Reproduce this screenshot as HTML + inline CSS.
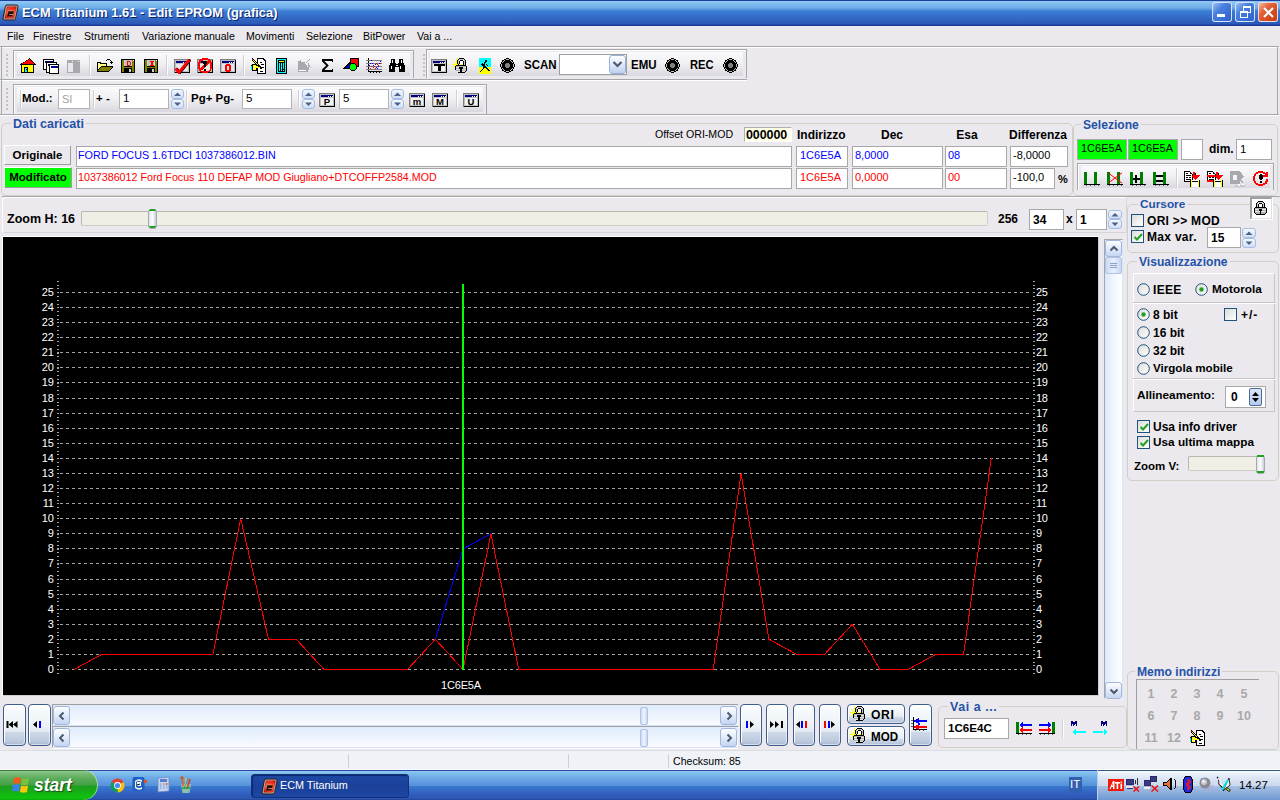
<!DOCTYPE html><html><head><meta charset="utf-8"><style>
html,body{margin:0;padding:0;}
body{width:1280px;height:800px;position:relative;overflow:hidden;background:#ebe9ed;font-family:"Liberation Sans", sans-serif;}
div{box-sizing:content-box;}
</style></head><body>
<div style="position:absolute;left:0px;top:0px;width:1280px;height:26px;background:linear-gradient(#1f3f9f 0px,#1f3f9f 1px,#92c9f3 1px,#7ab8ed 5px,#6eaae6 8px,#4f8fdb 10px,#3a7ed4 11px,#3670cc 16px,#2c57b5 24px,#1d3b96 25px,#1d3b96 26px)"></div>
<svg style="position:absolute;left:2px;top:4px" width="17" height="17" viewBox="0 0 17 17"><defs><radialGradient id="ai2" cx="0.5" cy="0.5" r="0.6"><stop offset="0" stop-color="#f8a080"/><stop offset="0.6" stop-color="#e84a2a"/><stop offset="1" stop-color="#c01010"/></radialGradient></defs>
<path d="M4.5 0.5 H15 L16.5 2 L16 6 L13.5 15.5 L12 16.5 H2 L0.5 15 L1 11 L3 2 Z" fill="#2a2020"/>
<path d="M5 1.5 H14.8 L15.6 2.5 L13 15 L12 15.6 H2.2 L1.5 14.6 L3.8 2.3 Z" fill="#b8a8a0"/>
<path d="M5.5 2.5 H14.2 L14.6 3 L12.3 14 L11.6 14.6 H3 L2.6 14 L4.8 3 Z" fill="url(#ai2)"/>
<path d="M7.2 4.5 H12.6 L12.3 5.6 H7 Z" fill="#ff1010"/>
<path d="M6.5 7.2 H11.8 L11.2 10 H7.4 L7.2 11 H10.8 L10.4 12.6 H5 Z" fill="#1a1010"/>
</svg>
<div style="position:absolute;left:22px;top:6px;font-size:13.5px;line-height:1;color:#fff;font-weight:bold;white-space:nowrap;text-shadow:1px 1px 0 #0a1f6a;transform:scaleX(0.955);transform-origin:0 0;">ECM Titanium 1.61 - Edit EPROM (grafica)</div>
<div style="position:absolute;left:1212px;top:2px;width:20px;height:20px;border:1px solid rgba(235,242,255,0.85);border-radius:3px;background:linear-gradient(135deg,#9ec0f4,#4a82e0 35%,#3a6fd6 70%,#3060c8);box-sizing:border-box"></div>
<div style="position:absolute;left:1235px;top:2px;width:20px;height:20px;border:1px solid rgba(235,242,255,0.85);border-radius:3px;background:linear-gradient(135deg,#9ec0f4,#4a82e0 35%,#3a6fd6 70%,#3060c8);box-sizing:border-box"></div>
<div style="position:absolute;left:1258px;top:2px;width:20px;height:20px;border:1px solid rgba(235,242,255,0.85);border-radius:3px;background:linear-gradient(135deg,#f2b9a0,#e4633a 35%,#d5481c 70%,#c84016);box-sizing:border-box"></div>
<div style="position:absolute;left:1217px;top:14px;width:8px;height:3px;background:#fff"></div>
<svg style="position:absolute;left:1235px;top:2px" width="21" height="21"><rect x="8.5" y="4.5" width="7" height="6" fill="none" stroke="#fff" stroke-width="1"/><rect x="8.5" y="4.5" width="7" height="1.5" fill="#fff"/><rect x="5.5" y="9.5" width="7" height="6" fill="#3d7ad8" stroke="#fff" stroke-width="1"/><rect x="5.5" y="9.5" width="7" height="1.5" fill="#fff"/></svg>
<svg style="position:absolute;left:1258px;top:2px" width="21" height="21"><path d="M6 6 L15 15 M15 6 L6 15" stroke="#fff" stroke-width="2"/></svg>
<div style="position:absolute;left:7px;top:31px;font-size:10.6px;line-height:1;color:#000;font-weight:normal;white-space:nowrap;">File</div>
<div style="position:absolute;left:33px;top:31px;font-size:10.6px;line-height:1;color:#000;font-weight:normal;white-space:nowrap;">Finestre</div>
<div style="position:absolute;left:84px;top:31px;font-size:10.6px;line-height:1;color:#000;font-weight:normal;white-space:nowrap;">Strumenti</div>
<div style="position:absolute;left:142px;top:31px;font-size:10.6px;line-height:1;color:#000;font-weight:normal;white-space:nowrap;">Variazione manuale</div>
<div style="position:absolute;left:246px;top:31px;font-size:10.6px;line-height:1;color:#000;font-weight:normal;white-space:nowrap;">Movimenti</div>
<div style="position:absolute;left:306px;top:31px;font-size:10.6px;line-height:1;color:#000;font-weight:normal;white-space:nowrap;">Selezione</div>
<div style="position:absolute;left:363px;top:31px;font-size:10.6px;line-height:1;color:#000;font-weight:normal;white-space:nowrap;">BitPower</div>
<div style="position:absolute;left:417px;top:31px;font-size:10.6px;line-height:1;color:#000;font-weight:normal;white-space:nowrap;">Vai a ...</div>
<div style="position:absolute;left:0px;top:46px;width:1279px;height:1px;background:#a7a6aa"></div>
<div style="position:absolute;left:0px;top:47px;width:1279px;height:1px;background:#fff"></div>
<div style="position:absolute;left:0px;top:79px;width:747px;height:1px;background:#a7a6aa"></div>
<div style="position:absolute;left:0px;top:80px;width:747px;height:1px;background:#fff"></div>
<div style="position:absolute;left:0px;top:114px;width:1279px;height:1px;background:#a7a6aa"></div>
<div style="position:absolute;left:0px;top:115px;width:1279px;height:1px;background:#fff"></div>
<div style="position:absolute;left:1px;top:46px;width:1px;height:69px;background:#a7a6aa"></div>
<div style="position:absolute;left:1277px;top:46px;width:1px;height:69px;background:#a7a6aa"></div>
<div style="position:absolute;left:13px;top:50px;width:400px;height:1px;background:#a7a6aa"></div>
<div style="position:absolute;left:13px;top:50px;width:1px;height:28px;background:#a7a6aa"></div>
<div style="position:absolute;left:14px;top:51px;width:399px;height:1px;background:#fff"></div>
<div style="position:absolute;left:14px;top:51px;width:1px;height:27px;background:#fff"></div>
<div style="position:absolute;left:413px;top:50px;width:1px;height:28px;background:#a7a6aa"></div>
<div style="position:absolute;left:17px;top:53px;width:393px;height:23px;background:linear-gradient(#fafafb 0%,#f1f0f3 45%,#dad8df 100%)"></div>
<div style="position:absolute;left:426px;top:49px;width:320px;height:1px;background:#a7a6aa"></div>
<div style="position:absolute;left:426px;top:49px;width:1px;height:29px;background:#a7a6aa"></div>
<div style="position:absolute;left:427px;top:50px;width:319px;height:1px;background:#fff"></div>
<div style="position:absolute;left:427px;top:50px;width:1px;height:28px;background:#fff"></div>
<div style="position:absolute;left:746px;top:49px;width:1px;height:29px;background:#a7a6aa"></div>
<div style="position:absolute;left:430px;top:52px;width:313px;height:24px;background:linear-gradient(#fafafb 0%,#f1f0f3 45%,#dad8df 100%)"></div>
<div style="position:absolute;left:13px;top:84px;width:473px;height:1px;background:#a7a6aa"></div>
<div style="position:absolute;left:13px;top:84px;width:1px;height:30px;background:#a7a6aa"></div>
<div style="position:absolute;left:14px;top:85px;width:472px;height:1px;background:#fff"></div>
<div style="position:absolute;left:14px;top:85px;width:1px;height:29px;background:#fff"></div>
<div style="position:absolute;left:486px;top:84px;width:1px;height:30px;background:#a7a6aa"></div>
<div style="position:absolute;left:17px;top:87px;width:466px;height:25px;background:linear-gradient(#fafafb 0%,#f1f0f3 45%,#dad8df 100%)"></div>
<div style="position:absolute;left:6px;top:54px;width:2px;height:2px;background:#b5b4b8;border-radius:1px"></div>
<div style="position:absolute;left:6px;top:58px;width:2px;height:2px;background:#b5b4b8;border-radius:1px"></div>
<div style="position:absolute;left:6px;top:62px;width:2px;height:2px;background:#b5b4b8;border-radius:1px"></div>
<div style="position:absolute;left:6px;top:66px;width:2px;height:2px;background:#b5b4b8;border-radius:1px"></div>
<div style="position:absolute;left:6px;top:70px;width:2px;height:2px;background:#b5b4b8;border-radius:1px"></div>
<div style="position:absolute;left:6px;top:74px;width:2px;height:2px;background:#b5b4b8;border-radius:1px"></div>
<div style="position:absolute;left:6px;top:88px;width:2px;height:2px;background:#b5b4b8;border-radius:1px"></div>
<div style="position:absolute;left:6px;top:92px;width:2px;height:2px;background:#b5b4b8;border-radius:1px"></div>
<div style="position:absolute;left:6px;top:96px;width:2px;height:2px;background:#b5b4b8;border-radius:1px"></div>
<div style="position:absolute;left:6px;top:100px;width:2px;height:2px;background:#b5b4b8;border-radius:1px"></div>
<div style="position:absolute;left:6px;top:104px;width:2px;height:2px;background:#b5b4b8;border-radius:1px"></div>
<div style="position:absolute;left:6px;top:108px;width:2px;height:2px;background:#b5b4b8;border-radius:1px"></div>
<div style="position:absolute;left:423px;top:54px;width:2px;height:2px;background:#b5b4b8;border-radius:1px"></div>
<div style="position:absolute;left:423px;top:58px;width:2px;height:2px;background:#b5b4b8;border-radius:1px"></div>
<div style="position:absolute;left:423px;top:62px;width:2px;height:2px;background:#b5b4b8;border-radius:1px"></div>
<div style="position:absolute;left:423px;top:66px;width:2px;height:2px;background:#b5b4b8;border-radius:1px"></div>
<div style="position:absolute;left:423px;top:70px;width:2px;height:2px;background:#b5b4b8;border-radius:1px"></div>
<div style="position:absolute;left:423px;top:74px;width:2px;height:2px;background:#b5b4b8;border-radius:1px"></div>
<div style="position:absolute;left:89px;top:55px;width:1px;height:20px;background:#cfced4"></div>
<div style="position:absolute;left:90px;top:55px;width:1px;height:20px;background:#fff"></div>
<div style="position:absolute;left:166px;top:55px;width:1px;height:20px;background:#cfced4"></div>
<div style="position:absolute;left:167px;top:55px;width:1px;height:20px;background:#fff"></div>
<div style="position:absolute;left:243px;top:55px;width:1px;height:20px;background:#cfced4"></div>
<div style="position:absolute;left:244px;top:55px;width:1px;height:20px;background:#fff"></div>
<div style="position:absolute;left:20px;top:90px;width:1px;height:18px;background:#cfced4"></div>
<div style="position:absolute;left:21px;top:90px;width:1px;height:18px;background:#fff"></div>
<div style="position:absolute;left:93px;top:90px;width:1px;height:18px;background:#cfced4"></div>
<div style="position:absolute;left:94px;top:90px;width:1px;height:18px;background:#fff"></div>
<div style="position:absolute;left:186px;top:90px;width:1px;height:18px;background:#cfced4"></div>
<div style="position:absolute;left:187px;top:90px;width:1px;height:18px;background:#fff"></div>
<div style="position:absolute;left:298px;top:90px;width:1px;height:18px;background:#cfced4"></div>
<div style="position:absolute;left:299px;top:90px;width:1px;height:18px;background:#fff"></div>
<div style="position:absolute;left:456px;top:90px;width:1px;height:18px;background:#cfced4"></div>
<div style="position:absolute;left:457px;top:90px;width:1px;height:18px;background:#fff"></div>
<svg style="position:absolute;left:20px;top:58px" width="17" height="16" viewBox="0 0 17 16" shape-rendering="crispEdges"><path d="M9 0 H10 V1 H11 V2 H12 V3 H13 V4 H14 V5 H15 V6 H16 V7 H14 V15 H1 V7 H0 V6 H1 V5 H3 V4 H5 V3 H6 V2 H8 V1 H9 Z" fill="#000"/><path d="M9 1 H10 V2 H11 V3 H12 V4 H13 V5 H14 V6 H2 V5 H4 V4 H6 V3 H7 V2 H9 Z" fill="#ff0000"/><rect x="2" y="7" width="11" height="7" fill="#ffff00"/><rect x="4" y="9" width="4" height="6" fill="#000"/><rect x="5" y="10" width="2" height="4" fill="#00ffff"/><rect x="6" y="11" width="1" height="1" fill="#000"/></svg>
<svg style="position:absolute;left:43px;top:59px" width="16" height="16" viewBox="0 0 16 16" shape-rendering="crispEdges"><rect x="0" y="0" width="11" height="11" fill="#000"/><rect x="1" y="1" width="9" height="9" fill="#fff"/><rect x="2" y="2" width="8" height="2" fill="#000080"/><rect x="3" y="3" width="11" height="11" fill="#000"/><rect x="4" y="4" width="9" height="9" fill="#fff"/><rect x="5" y="5" width="8" height="2" fill="#000080"/><rect x="6" y="5" width="10" height="10" fill="#000"/><rect x="7" y="6" width="8" height="8" fill="#fff"/><rect x="8" y="7" width="7" height="2" fill="#000080"/></svg>
<svg style="position:absolute;left:67px;top:60px" width="16" height="16" viewBox="0 0 16 16" shape-rendering="crispEdges"><rect x="0" y="0" width="13" height="13" fill="#a9a8ae"/><rect x="1" y="3" width="5" height="9" fill="#e9e8ec"/><rect x="5" y="1" width="1" height="1" fill="#fff"/><rect x="11" y="1" width="1" height="1" fill="#fff"/></svg>
<svg style="position:absolute;left:97px;top:58px" width="16" height="16" viewBox="0 0 16 16" shape-rendering="crispEdges"><path d="M0 4 H4 V5 H10 V8 H16 V9 L11 14 H0 Z" fill="#000"/><path d="M1 5 H3 V6 H9 V8 H4 L1 12 Z" fill="#ffff66"/><path d="M2 6 H3 V7 H2 Z M4 7 H5 V8 H4 Z M6 6 H7 V7 H6 Z M8 7 H9 V8 H8 Z M1 8 H2 V9 H1 Z M1 10 H2 V11 H1 Z" fill="#fff"/><path d="M4 9 H15 L11 13 H1 Z" fill="#808000"/><path d="M9 2 H10 V1 H13 V2 H14 V3 H15 V4 H14 V3 H13 V2 H10 V3 H9 Z" fill="#000"/><path d="M13 4 H16 V5 H15 V6 H14 V5 H13 Z" fill="#000"/></svg>
<svg style="position:absolute;left:121px;top:59px" width="14" height="14" viewBox="0 0 14 14" shape-rendering="crispEdges"><rect x="0" y="0" width="14" height="14" fill="#000"/><rect x="1" y="1" width="12" height="12" fill="#808000"/><rect x="3" y="1" width="8" height="7" fill="#000"/><rect x="3" y="1" width="8" height="6" fill="#c8d8d8"/><rect x="4" y="1" width="6" height="6" fill="#c0c0c0"/><path d="M6 2 H9 V3 H10 V6 H9 V7 H6 Z M7 3 V6 H9 V3 Z" fill="#ff0000"/><rect x="3" y="9" width="8" height="5" fill="#000"/><rect x="8" y="10" width="2" height="3" fill="#d0d0d0"/><rect x="12" y="1" width="1" height="1" fill="#fff"/></svg>
<svg style="position:absolute;left:144px;top:59px" width="14" height="14" viewBox="0 0 14 14" shape-rendering="crispEdges"><rect x="0" y="0" width="14" height="14" fill="#000"/><rect x="1" y="1" width="12" height="12" fill="#808000"/><rect x="3" y="1" width="8" height="7" fill="#000"/><rect x="3" y="1" width="8" height="6" fill="#c8d8d8"/><rect x="4" y="1" width="6" height="6" fill="#c0c0c0"/><path d="M6 2 H10 V3 H8.6 V6 H10 V7 H6 V6 H7.4 V3 H6 Z" fill="#ff0000"/><rect x="3" y="9" width="8" height="5" fill="#000"/><rect x="8" y="10" width="2" height="3" fill="#d0d0d0"/><rect x="12" y="1" width="1" height="1" fill="#fff"/></svg>
<svg style="position:absolute;left:174px;top:59px" width="17" height="15" viewBox="0 0 17 15" shape-rendering="crispEdges"><rect x="0" y="0" width="16" height="14" fill="#808080"/><rect x="1" y="1" width="15" height="13" fill="#000"/><rect x="1" y="1" width="14" height="12" fill="#c0c0c0"/><rect x="2" y="2" width="12" height="2" fill="#000080"/><rect x="9" y="3" width="1" height="1" fill="#fff"/><rect x="11" y="3" width="1" height="1" fill="#fff"/><rect x="13" y="3" width="1" height="1" fill="#fff"/><rect x="2" y="5" width="12" height="7" fill="#e8e8ea"/><path d="M1.5 9.5 L5 13.5 L15.5 0.5" stroke="#000" stroke-width="2.6" fill="none" transform="translate(1,0)" shape-rendering="geometricPrecision"/><path d="M1.5 9.5 L5 13.5 L15.5 0.5" stroke="#ff0000" stroke-width="2.8" fill="none" shape-rendering="geometricPrecision"/></svg>
<svg style="position:absolute;left:197px;top:58px" width="16" height="16" viewBox="0 0 16 16" shape-rendering="crispEdges"><g transform="translate(0,1)"><rect x="0" y="0" width="16" height="14" fill="#808080"/><rect x="1" y="1" width="15" height="13" fill="#000"/><rect x="1" y="1" width="14" height="12" fill="#c0c0c0"/><rect x="2" y="2" width="12" height="2" fill="#000080"/><rect x="9" y="3" width="1" height="1" fill="#fff"/><rect x="11" y="3" width="1" height="1" fill="#fff"/><rect x="13" y="3" width="1" height="1" fill="#fff"/><rect x="2" y="5" width="12" height="7" fill="#e8e8ea"/></g><path d="M5 0 H11 V1 H13 V2 H14 V4 H15 V11 H14 V13 H13 V14 H11 V15 H5 V14 H3 V13 H2 V11 H1 V4 H2 V2 H3 V1 H5 Z M5.5 2 V2.5 H4 V3.5 H3.5 V5 H2.8 V10.5 H3.2 L11.8 2 H10.5 V2 Z M4.2 12.8 H5.5 V13 H10.5 V12.5 H12 V11.5 H12.5 V10 H13.2 V4.5 H12.8 Z" fill="#ff0000" fill-rule="evenodd"/><rect x="7" y="3" width="2" height="6" fill="#000"/><rect x="6" y="3" width="4" height="3" fill="#000"/><rect x="7" y="11" width="2" height="2" fill="#000"/></svg>
<svg style="position:absolute;left:220px;top:59px" width="16" height="14" viewBox="0 0 16 14" shape-rendering="crispEdges"><rect x="0" y="0" width="16" height="14" fill="#808080"/><rect x="1" y="1" width="15" height="13" fill="#000"/><rect x="1" y="1" width="14" height="12" fill="#c0c0c0"/><rect x="2" y="2" width="12" height="2" fill="#000080"/><rect x="9" y="3" width="1" height="1" fill="#fff"/><rect x="11" y="3" width="1" height="1" fill="#fff"/><rect x="13" y="3" width="1" height="1" fill="#fff"/><rect x="2" y="5" width="12" height="7" fill="#e8e8ea"/><path d="M6 5 H10 V6 H11 V12 H10 V13 H6 V12 H5 V6 H6 Z M7 7 V11 H9 V7 Z" fill="#ff0000" fill-rule="evenodd"/></svg>
<svg style="position:absolute;left:251px;top:58px" width="16" height="16" viewBox="0 0 16 16" shape-rendering="crispEdges"><path d="M6 0 H12 L15 3 V16 H6 Z" fill="#000"/><path d="M7 1 H11 V4 H14 V15 H7 Z" fill="#fff"/><path d="M11 1 L14 4 H11 Z" fill="#fff"/><rect x="9" y="4" width="2" height="1" fill="#000"/><rect x="10" y="6" width="3" height="1" fill="#000"/><rect x="10" y="9" width="3" height="1" fill="#000"/><rect x="9" y="13" width="3" height="1" fill="#000"/><path d="M1 0 H2 V1 H3 V2 H4 V3 H5 V4 H6 V5 H7 V6 H8 V7 H9 V8 H10 V9 H11 V11 H9 V10 H8 V9 H7 V8 H6 V7 H5 V6 H4 V5 H3 V4 H2 V3 H1 Z" fill="#000"/><path d="M2 1 V2 H3 V3 H4 V4 H5 V5 H6 V6 H7 V7 H8 V8 H9 V9 H10 V10 H9 V9 H8 V8 H7 V7 H6 V6 H5 V5 H4 V4 H3 V3 H2 Z" fill="#ffff00"/><rect x="1" y="1" width="1" height="1" fill="#ff0000"/><path d="M0 7 H1 V6 H6 V7 H8 V8 H10 V9 H11 V10 H6 V13 H1 V12 H0 Z" fill="#000"/><path d="M2 7 H5 V8 H7 V9 H9 V10 H5 V12 H2 Z" fill="#ffff00"/><path d="M3 8 H4 V9 H3 Z M2 10 H3 V11 H2 Z M4 10 H5 V11 H4 Z" fill="#fff"/><rect x="0" y="8" width="1" height="4" fill="#00ffff"/></svg>
<svg style="position:absolute;left:276px;top:58px" width="16" height="16" viewBox="0 0 16 16" shape-rendering="crispEdges"><rect x="0" y="0" width="11" height="16" fill="#000"/><rect x="1" y="1" width="9" height="14" fill="#00ffff"/><rect x="2" y="2" width="7" height="12" fill="#000"/><rect x="3" y="3" width="5" height="1" fill="#ffff00"/><rect x="3" y="5" width="1" height="8" fill="#00ffff"/><rect x="5" y="5" width="1" height="8" fill="#00ffff"/><rect x="7" y="5" width="1" height="6" fill="#00ffff"/><rect x="7" y="12" width="1" height="1" fill="#c0c0c0"/></svg>
<svg style="position:absolute;left:297px;top:58px" width="16" height="16" viewBox="0 0 16 16" shape-rendering="crispEdges"><path d="M1 3 H3 V2 H4 V4 H8 V6 H10 V10 H11 V14 H1 Z" fill="#a9a8ae"/><rect x="2" y="12" width="7" height="1" fill="#fff"/><path d="M12 1 H13 V2 H12 V3 H11 V4 H10 V5 H9 V4 H10 V3 H11 V2 H12 Z" fill="#a9a8ae"/><path d="M11 5 H12 V7 H13 V9 H14 V10 H12 V12 H11 V14 H10 V9 H11 Z" fill="#a9a8ae"/><path d="M9 6 H10 V7 H9 Z M12 9 H13 V10 H12 Z" fill="#fff"/></svg>
<svg style="position:absolute;left:321px;top:59px" width="13" height="13" viewBox="0 0 13 13" shape-rendering="crispEdges"><rect x="1" y="0" width="11" height="2" fill="#000"/><rect x="11" y="1" width="1" height="2" fill="#000"/><rect x="1" y="11" width="11" height="2" fill="#000"/><rect x="11" y="10" width="1" height="2" fill="#000"/><path d="M1.5 1.5 L6.5 6.5 L1.5 11.5" stroke="#000" stroke-width="1.8" fill="none" shape-rendering="geometricPrecision"/></svg>
<svg style="position:absolute;left:343px;top:58px" width="16" height="16" viewBox="0 0 16 16" shape-rendering="crispEdges"><rect x="7" y="0" width="9" height="9" fill="#000"/><rect x="8" y="1" width="7" height="7" fill="#ff0000"/><path d="M0 10 L7 4 V11 H0 Z" fill="#000"/><path d="M2 10 L7 5.5 V10 Z" fill="#0000ff"/><path d="M8 5 H12 V6 H13 V7 H14 V11 H13 V12 H12 V13 H8 V12 H7 V11 H6 V7 H7 V6 H8 Z" fill="#000"/><path d="M8 6 H12 V7 H13 V11 H12 V12 H8 V11 H7 V7 H8 Z" fill="#00ff00"/></svg>
<svg style="position:absolute;left:366px;top:58px" width="16" height="16" viewBox="0 0 16 16" shape-rendering="crispEdges"><rect x="2" y="0" width="1" height="14" fill="#000"/><rect x="2" y="13" width="14" height="1" fill="#000"/><rect x="0" y="2" width="16" height="1" fill="#808080"/><rect x="0" y="5" width="16" height="1" fill="#808080"/><rect x="0" y="8" width="16" height="1" fill="#808080"/><rect x="0" y="11" width="16" height="1" fill="#808080"/><path d="M4 14 V15 M7 14 V15 M10 14 V15 M13 14 V15" stroke="#000" stroke-width="1"/><path d="M5 2 H6 V3 H5 Z M4 5 H5 V6 H4 Z M6 5 H7 V6 H6 Z M3 7 H4 V8 H3 Z M7 7 H8 V8 H7 Z M9 6 H10 V7 H9 Z M10 9 H11 V10 H10 Z M11 10 H12 V11 H11 Z M12 8 H13 V9 H12 Z M13 5 H14 V6 H13 Z M14 3 H15 V4 H14 Z" fill="#0000ff"/><path d="M4 10 H5 V11 H4 Z M5 8 H6 V9 H5 Z M7 9 H8 V10 H7 Z M8 8 H9 V9 H8 Z M9 10 H10 V11 H9 Z M10 5 H11 V6 H10 Z M11 6 H12 V7 H11 Z M12 7 H13 V8 H12 Z M14 5 H15 V6 H14 Z" fill="#ff0000"/></svg>
<svg style="position:absolute;left:389px;top:58px" width="16" height="16" viewBox="0 0 16 16" shape-rendering="crispEdges"><path d="M2 1 H6 V5 H7 V6 H9 V5 H10 V1 H14 V5 H15 V7 H16 V14 H10 V9 H6 V14 H0 V7 H1 V5 H2 Z" fill="#000"/><rect x="3" y="2" width="1" height="3" fill="#fff"/><rect x="12" y="2" width="1" height="3" fill="#fff"/><rect x="2" y="8" width="1" height="3" fill="#fff"/><rect x="11" y="8" width="1" height="3" fill="#fff"/><rect x="7" y="7" width="2" height="1" fill="#fff"/></svg>
<svg style="position:absolute;left:431px;top:59px" width="16" height="14" viewBox="0 0 16 14" shape-rendering="crispEdges"><rect x="0" y="0" width="16" height="14" fill="#808080"/><rect x="1" y="1" width="15" height="13" fill="#000"/><rect x="1" y="1" width="14" height="12" fill="#c0c0c0"/><rect x="2" y="2" width="12" height="2" fill="#000080"/><rect x="9" y="3" width="1" height="1" fill="#fff"/><rect x="11" y="3" width="1" height="1" fill="#fff"/><rect x="13" y="3" width="1" height="1" fill="#fff"/><rect x="2" y="5" width="12" height="7" fill="#f2f2f2"/><rect x="3" y="5" width="11" height="2" fill="#000"/><rect x="7" y="7" width="3" height="5" fill="#000"/></svg>
<svg style="position:absolute;left:452px;top:58px" width="16" height="16" viewBox="0 0 16 16" shape-rendering="crispEdges"><rect x="4" y="0" width="1" height="7" fill="#ffff00"/><rect x="0" y="6" width="6" height="1" fill="#ffff00"/><rect x="1" y="3" width="1" height="1" fill="#ffff00"/><rect x="2" y="4" width="1" height="1" fill="#ffff00"/><rect x="3" y="5" width="1" height="1" fill="#ffff00"/><rect x="1" y="9" width="1" height="1" fill="#ffff00"/><rect x="2" y="8" width="1" height="1" fill="#ffff00"/><rect x="3" y="7" width="1" height="1" fill="#ffff00"/><rect x="9" y="6" width="2" height="1" fill="#ffff00"/><rect x="7" y="0" width="5" height="1" fill="#000"/><rect x="6" y="1" width="1" height="1" fill="#000"/><rect x="12" y="1" width="1" height="1" fill="#000"/><rect x="5" y="2" width="1" height="4" fill="#000"/><rect x="13" y="2" width="1" height="5" fill="#000"/><rect x="7" y="1" width="5" height="1" fill="#c8c8c8"/><rect x="6" y="2" width="1" height="4" fill="#c8c8c8"/><rect x="12" y="2" width="1" height="5" fill="#c8c8c8"/><rect x="8" y="2" width="3" height="1" fill="#000"/><rect x="7" y="3" width="1" height="3" fill="#000"/><rect x="11" y="3" width="1" height="4" fill="#000"/><rect x="6" y="6" width="1" height="1" fill="#000"/><rect x="8" y="3" width="3" height="3" fill="#fff"/><path d="M4 7 H14 V8 H15 V13 H14 V14 H13 V15 H6 V14 H5 V13 H4 V12 H3 V8 H4 Z" fill="#000"/><rect x="4" y="8" width="10" height="5" fill="#b0b0b0"/><rect x="5" y="13" width="8" height="1" fill="#b0b0b0"/><rect x="4" y="9" width="10" height="1" fill="#e4e4e4"/><rect x="4" y="11" width="10" height="1" fill="#e4e4e4"/><rect x="5" y="13" width="8" height="1" fill="#e4e4e4"/><rect x="7" y="9" width="4" height="2" fill="#000"/><rect x="8" y="11" width="2" height="3" fill="#000"/></svg>
<svg style="position:absolute;left:479px;top:58px" width="12" height="16" viewBox="0 0 12 16" shape-rendering="crispEdges"><rect x="0" y="0" width="12" height="9" fill="#00ffff"/><rect x="0" y="9" width="12" height="7" fill="#ffff00"/><rect x="6" y="2" width="2" height="2" fill="#000"/><path d="M5 4 H7 V5 H6 V8 H7 V9 H8 V10 H9 V11 H10 V12 H11 V13 H9 V12 H8 V11 H7 V10 H5 V11 H4 V12 H3 V13 H2 V14 H1 V13 H2 V12 H3 V11 H4 V8 H3 V7 H2 V6 H3 V5 H4 V6 H5 Z" fill="#000"/><path d="M7 6 H8 V7 H9 V8 H8 V7 H7 Z" fill="#000"/></svg>
<svg style="position:absolute;left:500px;top:58px" width="15" height="15" viewBox="0 0 15 15" shape-rendering="crispEdges"><circle cx="7.5" cy="7.5" r="7.3" fill="#000"/><circle cx="7.5" cy="7.5" r="6.3" fill="#c0c0c0"/><circle cx="7.5" cy="7.5" r="5.6" fill="#000"/><circle cx="7.5" cy="7.5" r="2.5" fill="#808080"/></svg>
<div style="position:absolute;left:524px;top:59px;font-size:11.5px;line-height:1;color:#000;font-weight:bold;white-space:nowrap;transform:scaleY(1.12);transform-origin:0 0">SCAN</div>
<div style="position:absolute;left:559px;top:54px;width:68px;height:21px;background:#fff;border:1px solid #a0a0a4;box-sizing:border-box"></div>
<div style="position:absolute;left:609px;top:55px;width:17px;height:19px;border:1px solid #98afd6;border-radius:3px;background:linear-gradient(#fdfeff,#e6eefb 40%,#bcd0ee);box-sizing:border-box"><svg width="15" height="17" style="position:absolute;left:0;top:0"><path d="M3.5 6 L7.5 10 L11.5 6" stroke="#4d5a70" stroke-width="2.2" fill="none"/></svg></div>
<div style="position:absolute;left:631px;top:59px;font-size:11.5px;line-height:1;color:#000;font-weight:bold;white-space:nowrap;transform:scaleY(1.12);transform-origin:0 0">EMU</div>
<svg style="position:absolute;left:665px;top:58px" width="15" height="15" viewBox="0 0 15 15" shape-rendering="crispEdges"><circle cx="7.5" cy="7.5" r="7.3" fill="#000"/><circle cx="7.5" cy="7.5" r="6.3" fill="#c0c0c0"/><circle cx="7.5" cy="7.5" r="5.6" fill="#000"/><circle cx="7.5" cy="7.5" r="2.5" fill="#808080"/></svg>
<div style="position:absolute;left:690px;top:59px;font-size:11.2px;line-height:1;color:#000;font-weight:bold;white-space:nowrap;transform:scaleY(1.12);transform-origin:0 0">REC</div>
<svg style="position:absolute;left:723px;top:58px" width="15" height="15" viewBox="0 0 15 15" shape-rendering="crispEdges"><circle cx="7.5" cy="7.5" r="7.3" fill="#000"/><circle cx="7.5" cy="7.5" r="6.3" fill="#c0c0c0"/><circle cx="7.5" cy="7.5" r="5.6" fill="#000"/><circle cx="7.5" cy="7.5" r="2.5" fill="#808080"/></svg>
<div style="position:absolute;left:22px;top:93px;font-size:11.5px;line-height:1;color:#000;font-weight:bold;white-space:nowrap;">Mod.:</div>
<div style="position:absolute;left:58px;top:89px;width:30px;height:18px;background:#fff;border:1px solid #b3b3b3;"><div style="position:absolute;left:3px;top:4px;font-size:11px;line-height:1;color:#a0a0a0;font-weight:normal;white-space:nowrap">SI</div></div>
<div style="position:absolute;left:96px;top:93px;font-size:11.5px;line-height:1;color:#000;font-weight:bold;white-space:nowrap;">+ -</div>
<div style="position:absolute;left:119px;top:89px;width:48px;height:18px;background:#fff;border:1px solid #b3b3b3;"><div style="position:absolute;left:3px;top:3px;font-size:11.5px;line-height:1;color:#000;font-weight:normal;white-space:nowrap">1</div></div>
<div style="position:absolute;left:171px;top:89px;width:13px;height:10px;border:1px solid #a3bde3;border-radius:3px;background:linear-gradient(#f4f8fe,#d0def6);box-sizing:border-box"><svg width="11" height="8" style="position:absolute;left:0;top:0"><path d="M2.0 6.0 L5.5 2.5 L9.0 6.0 Z" fill="#4d6185"/></svg></div>
<div style="position:absolute;left:171px;top:99px;width:13px;height:10px;border:1px solid #a3bde3;border-radius:3px;background:linear-gradient(#f4f8fe,#d0def6);box-sizing:border-box"><svg width="11" height="8" style="position:absolute;left:0;top:0"><path d="M2.0 2.5 L5.5 6.0 L9.0 2.5 Z" fill="#4d6185"/></svg></div>
<div style="position:absolute;left:191px;top:93px;font-size:11.5px;line-height:1;color:#000;font-weight:bold;white-space:nowrap;">Pg+ Pg-</div>
<div style="position:absolute;left:242px;top:89px;width:48px;height:18px;background:#fff;border:1px solid #b3b3b3;"><div style="position:absolute;left:3px;top:3px;font-size:11.5px;line-height:1;color:#000;font-weight:normal;white-space:nowrap">5</div></div>
<div style="position:absolute;left:302px;top:89px;width:13px;height:10px;border:1px solid #a3bde3;border-radius:3px;background:linear-gradient(#f4f8fe,#d0def6);box-sizing:border-box"><svg width="11" height="8" style="position:absolute;left:0;top:0"><path d="M2.0 6.0 L5.5 2.5 L9.0 6.0 Z" fill="#4d6185"/></svg></div>
<div style="position:absolute;left:302px;top:99px;width:13px;height:10px;border:1px solid #a3bde3;border-radius:3px;background:linear-gradient(#f4f8fe,#d0def6);box-sizing:border-box"><svg width="11" height="8" style="position:absolute;left:0;top:0"><path d="M2.0 2.5 L5.5 6.0 L9.0 2.5 Z" fill="#4d6185"/></svg></div>
<svg style="position:absolute;left:319px;top:93px" width="16" height="14" viewBox="0 0 16 14" shape-rendering="crispEdges"><rect x="0" y="0" width="16" height="14" fill="#808080"/><rect x="1" y="1" width="15" height="13" fill="#000"/><rect x="1" y="1" width="14" height="12" fill="#c0c0c0"/><rect x="2" y="2" width="12" height="2" fill="#000080"/><rect x="9" y="3" width="1" height="1" fill="#fff"/><rect x="11" y="3" width="1" height="1" fill="#fff"/><rect x="13" y="3" width="1" height="1" fill="#fff"/><rect x="2" y="5" width="12" height="7" fill="#f2f2f2"/><text x="8" y="12" font-size="9.5" font-family="Liberation Sans" font-weight="bold" fill="#000" text-anchor="middle">P</text></svg>
<div style="position:absolute;left:339px;top:89px;width:48px;height:18px;background:#fff;border:1px solid #b3b3b3;"><div style="position:absolute;left:3px;top:3px;font-size:11.5px;line-height:1;color:#000;font-weight:normal;white-space:nowrap">5</div></div>
<div style="position:absolute;left:391px;top:89px;width:13px;height:10px;border:1px solid #a3bde3;border-radius:3px;background:linear-gradient(#f4f8fe,#d0def6);box-sizing:border-box"><svg width="11" height="8" style="position:absolute;left:0;top:0"><path d="M2.0 6.0 L5.5 2.5 L9.0 6.0 Z" fill="#4d6185"/></svg></div>
<div style="position:absolute;left:391px;top:99px;width:13px;height:10px;border:1px solid #a3bde3;border-radius:3px;background:linear-gradient(#f4f8fe,#d0def6);box-sizing:border-box"><svg width="11" height="8" style="position:absolute;left:0;top:0"><path d="M2.0 2.5 L5.5 6.0 L9.0 2.5 Z" fill="#4d6185"/></svg></div>
<svg style="position:absolute;left:409px;top:93px" width="16" height="14" viewBox="0 0 16 14" shape-rendering="crispEdges"><rect x="0" y="0" width="16" height="14" fill="#808080"/><rect x="1" y="1" width="15" height="13" fill="#000"/><rect x="1" y="1" width="14" height="12" fill="#c0c0c0"/><rect x="2" y="2" width="12" height="2" fill="#000080"/><rect x="9" y="3" width="1" height="1" fill="#fff"/><rect x="11" y="3" width="1" height="1" fill="#fff"/><rect x="13" y="3" width="1" height="1" fill="#fff"/><rect x="2" y="5" width="12" height="7" fill="#f2f2f2"/><text x="8" y="12" font-size="9.5" font-family="Liberation Sans" font-weight="bold" fill="#000" text-anchor="middle">m</text></svg>
<svg style="position:absolute;left:432px;top:93px" width="16" height="14" viewBox="0 0 16 14" shape-rendering="crispEdges"><rect x="0" y="0" width="16" height="14" fill="#808080"/><rect x="1" y="1" width="15" height="13" fill="#000"/><rect x="1" y="1" width="14" height="12" fill="#c0c0c0"/><rect x="2" y="2" width="12" height="2" fill="#000080"/><rect x="9" y="3" width="1" height="1" fill="#fff"/><rect x="11" y="3" width="1" height="1" fill="#fff"/><rect x="13" y="3" width="1" height="1" fill="#fff"/><rect x="2" y="5" width="12" height="7" fill="#f2f2f2"/><text x="8" y="12" font-size="9.5" font-family="Liberation Sans" font-weight="bold" fill="#000" text-anchor="middle">M</text></svg>
<svg style="position:absolute;left:463px;top:93px" width="16" height="14" viewBox="0 0 16 14" shape-rendering="crispEdges"><rect x="0" y="0" width="16" height="14" fill="#808080"/><rect x="1" y="1" width="15" height="13" fill="#000"/><rect x="1" y="1" width="14" height="12" fill="#c0c0c0"/><rect x="2" y="2" width="12" height="2" fill="#000080"/><rect x="9" y="3" width="1" height="1" fill="#fff"/><rect x="11" y="3" width="1" height="1" fill="#fff"/><rect x="13" y="3" width="1" height="1" fill="#fff"/><rect x="2" y="5" width="12" height="7" fill="#f2f2f2"/><text x="8" y="12" font-size="9.5" font-family="Liberation Sans" font-weight="bold" fill="#000" text-anchor="middle">U</text></svg>
<div style="position:absolute;left:1px;top:123px;width:1070px;height:71px;border:1px solid #d0d0c8;border-radius:5px;"></div>
<div style="position:absolute;left:11px;top:118px;padding:0 2px;background:#ebe9ed;font-size:12.5px;line-height:1;color:#2452a8;font-weight:bold;white-space:nowrap;">Dati caricati</div>
<div style="position:absolute;left:655px;top:129px;font-size:10.6px;line-height:1;color:#000;font-weight:normal;white-space:nowrap;">Offset ORI-MOD</div>
<div style="position:absolute;left:744px;top:127px;width:48px;height:15px;background:#ffffe6;border-top:1px solid #b0b0b0;border-left:1px solid #b0b0b0;border-bottom:1px solid #fff;border-right:1px solid #fff;box-sizing:border-box"></div>
<div style="position:absolute;left:746px;top:129px;font-size:12.5px;line-height:1;color:#000;font-weight:bold;white-space:nowrap;letter-spacing:-0.1px">000000</div>
<div style="position:absolute;left:797px;top:129px;font-size:12px;line-height:1;color:#000;font-weight:bold;white-space:nowrap;">Indirizzo</div>
<div style="position:absolute;left:692px;width:400px;text-align:center;top:129px;font-size:12px;line-height:1;color:#000;font-weight:bold;white-space:nowrap;">Dec</div>
<div style="position:absolute;left:767px;width:400px;text-align:center;top:129px;font-size:12px;line-height:1;color:#000;font-weight:bold;white-space:nowrap;">Esa</div>
<div style="position:absolute;left:1009px;top:129px;font-size:12px;line-height:1;color:#000;font-weight:bold;white-space:nowrap;">Differenza</div>
<div style="position:absolute;left:4px;top:145px;width:67px;height:20px;background:#ebe9ed;border-top:1px solid #fff;border-left:1px solid #fff;border-right:1px solid #9d9da1;border-bottom:1px solid #9d9da1;box-sizing:border-box"></div>
<div style="position:absolute;left:-162.5px;width:400px;text-align:center;top:150px;font-size:11.5px;line-height:1;color:#000;font-weight:bold;white-space:nowrap;">Originale</div>
<div style="position:absolute;left:4px;top:167px;width:68px;height:21px;background:#00ff00;border-top:1px solid #fff;border-left:1px solid #fff;border-right:1px solid #9d9da1;border-bottom:1px solid #9d9da1;box-sizing:border-box"></div>
<div style="position:absolute;left:-162px;width:400px;text-align:center;top:172px;font-size:11.5px;line-height:1;color:#000;font-weight:bold;white-space:nowrap;">Modificato</div>
<div style="position:absolute;left:76px;top:146px;width:714px;height:19px;background:#fff;border:1px solid #a8a8a8;"><div style="position:absolute;left:1px;top:3px;font-size:10.75px;line-height:1;color:#0000ff;font-weight:normal;white-space:nowrap">FORD FOCUS 1.6TDCI 1037386012.BIN</div></div>
<div style="position:absolute;left:76px;top:168px;width:714px;height:19px;background:#fff;border:1px solid #a8a8a8;"><div style="position:absolute;left:1px;top:3px;font-size:10.7px;line-height:1;color:#ff0000;font-weight:normal;white-space:nowrap">1037386012 Ford Focus 110 DEFAP MOD Giugliano+DTCOFFP2584.MOD</div></div>
<div style="position:absolute;left:796px;top:146px;width:50px;height:19px;background:#fff;border:1px solid #a8a8a8;"><div style="position:absolute;left:3px;top:3px;font-size:11px;line-height:1;color:#0000ff;font-weight:normal;white-space:nowrap">1C6E5A</div></div>
<div style="position:absolute;left:796px;top:168px;width:50px;height:19px;background:#fff;border:1px solid #a8a8a8;"><div style="position:absolute;left:3px;top:3px;font-size:11px;line-height:1;color:#ff0000;font-weight:normal;white-space:nowrap">1C6E5A</div></div>
<div style="position:absolute;left:852px;top:146px;width:89px;height:19px;background:#fff;border:1px solid #a8a8a8;"><div style="position:absolute;left:2px;top:3px;font-size:11px;line-height:1;color:#0000ff;font-weight:normal;white-space:nowrap">8,0000</div></div>
<div style="position:absolute;left:852px;top:168px;width:89px;height:19px;background:#fff;border:1px solid #a8a8a8;"><div style="position:absolute;left:2px;top:3px;font-size:11px;line-height:1;color:#ff0000;font-weight:normal;white-space:nowrap">0,0000</div></div>
<div style="position:absolute;left:945px;top:146px;width:60px;height:19px;background:#fff;border:1px solid #a8a8a8;"><div style="position:absolute;left:2px;top:3px;font-size:11px;line-height:1;color:#0000ff;font-weight:normal;white-space:nowrap">08</div></div>
<div style="position:absolute;left:945px;top:168px;width:60px;height:19px;background:#fff;border:1px solid #a8a8a8;"><div style="position:absolute;left:2px;top:3px;font-size:11px;line-height:1;color:#ff0000;font-weight:normal;white-space:nowrap">00</div></div>
<div style="position:absolute;left:1010px;top:146px;width:56px;height:19px;background:#fff;border:1px solid #a8a8a8;"><div style="position:absolute;left:2px;top:3px;font-size:11px;line-height:1;color:#000;font-weight:normal;white-space:nowrap">-8,0000</div></div>
<div style="position:absolute;left:1010px;top:168px;width:43px;height:19px;background:#fff;border:1px solid #a8a8a8;"><div style="position:absolute;left:2px;top:3px;font-size:11px;line-height:1;color:#000;font-weight:normal;white-space:nowrap">-100,0</div></div>
<div style="position:absolute;left:1058px;top:174px;font-size:11px;line-height:1;color:#000;font-weight:bold;white-space:nowrap;">%</div>
<div style="position:absolute;left:1073px;top:124px;width:203px;height:70px;border:1px solid #d0d0c8;border-radius:5px;"></div>
<div style="position:absolute;left:1081px;top:119px;padding:0 2px;background:#ebe9ed;font-size:12.1px;line-height:1;color:#2452a8;font-weight:bold;white-space:nowrap;">Selezione</div>
<div style="position:absolute;left:1077px;top:139px;width:48px;height:19px;background:#00ff00;border:1px solid #a8a8a8;"><div style="position:absolute;left:3px;top:3px;font-size:11px;line-height:1;color:#000;font-weight:normal;white-space:nowrap">1C6E5A</div></div>
<div style="position:absolute;left:1128px;top:139px;width:48px;height:19px;background:#00ff00;border:1px solid #a8a8a8;"><div style="position:absolute;left:3px;top:3px;font-size:11px;line-height:1;color:#000;font-weight:normal;white-space:nowrap">1C6E5A</div></div>
<div style="position:absolute;left:1181px;top:139px;width:20px;height:19px;background:#fff;border:1px solid #a8a8a8;"><div style="position:absolute;left:3px;top:3px;font-size:11px;line-height:1;color:#000;font-weight:normal;white-space:nowrap"></div></div>
<div style="position:absolute;left:1209px;top:143px;font-size:12px;line-height:1;color:#000;font-weight:bold;white-space:nowrap;">dim.</div>
<div style="position:absolute;left:1236px;top:139px;width:34px;height:19px;background:#fff;border:1px solid #a8a8a8;"><div style="position:absolute;left:3px;top:4px;font-size:11.5px;line-height:1;color:#000;font-weight:normal;white-space:nowrap">1</div></div>
<div style="position:absolute;left:1077px;top:163px;width:196px;height:1px;background:#a7a6aa"></div>
<div style="position:absolute;left:1077px;top:163px;width:1px;height:27px;background:#a7a6aa"></div>
<div style="position:absolute;left:1078px;top:164px;width:195px;height:1px;background:#fff"></div>
<div style="position:absolute;left:1078px;top:164px;width:1px;height:26px;background:#fff"></div>
<div style="position:absolute;left:1273px;top:163px;width:1px;height:27px;background:#a7a6aa"></div>
<div style="position:absolute;left:1081px;top:166px;width:189px;height:22px;background:linear-gradient(#fafafb 0%,#f1f0f3 45%,#dad8df 100%)"></div>
<svg style="position:absolute;left:1084px;top:172px" width="16" height="14" viewBox="0 0 16 14" shape-rendering="crispEdges"><rect x="0" y="0" width="3" height="12" fill="#008000"/><rect x="10" y="0" width="3" height="12" fill="#008000"/><rect x="0" y="12" width="16" height="1" fill="#000"/><rect x="2" y="13" width="1" height="1" fill="#606060"/><rect x="6" y="13" width="1" height="1" fill="#606060"/><rect x="10" y="13" width="1" height="1" fill="#606060"/><rect x="14" y="13" width="1" height="1" fill="#606060"/></svg>
<svg style="position:absolute;left:1107px;top:172px" width="16" height="14" viewBox="0 0 16 14" shape-rendering="crispEdges"><rect x="0" y="0" width="3" height="12" fill="#008000"/><rect x="10" y="0" width="3" height="12" fill="#008000"/><rect x="0" y="12" width="16" height="1" fill="#000"/><rect x="2" y="13" width="1" height="1" fill="#606060"/><rect x="6" y="13" width="1" height="1" fill="#606060"/><rect x="10" y="13" width="1" height="1" fill="#606060"/><rect x="14" y="13" width="1" height="1" fill="#606060"/><path d="M1.5 11 L4 9 L8 6 L12 9 L15 11 M1.5 1 L4 3 L8 6 L12 3 L15 1" stroke="#ff0000" stroke-width="1" fill="none" shape-rendering="geometricPrecision"/></svg>
<svg style="position:absolute;left:1130px;top:172px" width="16" height="14" viewBox="0 0 16 14" shape-rendering="crispEdges"><rect x="0" y="0" width="3" height="12" fill="#008000"/><rect x="10" y="0" width="3" height="12" fill="#008000"/><rect x="0" y="12" width="16" height="1" fill="#000"/><rect x="2" y="13" width="1" height="1" fill="#606060"/><rect x="6" y="13" width="1" height="1" fill="#606060"/><rect x="10" y="13" width="1" height="1" fill="#606060"/><rect x="14" y="13" width="1" height="1" fill="#606060"/><rect x="3" y="6" width="7" height="2" fill="#000"/><rect x="5" y="3" width="2" height="8" fill="#000"/></svg>
<svg style="position:absolute;left:1153px;top:172px" width="16" height="14" viewBox="0 0 16 14" shape-rendering="crispEdges"><rect x="0" y="0" width="3" height="12" fill="#008000"/><rect x="10" y="0" width="3" height="12" fill="#008000"/><rect x="0" y="12" width="16" height="1" fill="#000"/><rect x="2" y="13" width="1" height="1" fill="#606060"/><rect x="6" y="13" width="1" height="1" fill="#606060"/><rect x="10" y="13" width="1" height="1" fill="#606060"/><rect x="14" y="13" width="1" height="1" fill="#606060"/><rect x="3" y="3" width="7" height="2" fill="#000"/><rect x="3" y="8" width="7" height="2" fill="#000"/></svg>
<div style="position:absolute;left:1176px;top:168px;width:1px;height:20px;background:#cfced4"></div>
<div style="position:absolute;left:1177px;top:168px;width:1px;height:20px;background:#fff"></div>
<svg style="position:absolute;left:1184px;top:171px" width="16" height="16" viewBox="0 0 16 16" shape-rendering="crispEdges"><path d="M0 0 H6 V1 H7 V2 H8 V3 H9 V11 H0 Z" fill="#000"/><path d="M1 1 H6 V3 H8 V10 H1 Z" fill="#fff"/><rect x="2" y="2" width="2" height="1" fill="#000"/><rect x="2" y="4" width="5" height="1" fill="#000"/><rect x="2" y="6" width="2" height="1" fill="#000"/><rect x="5" y="6" width="2" height="1" fill="#000"/><rect x="2" y="8" width="5" height="1" fill="#000"/><path d="M9 1 H11 V4 H16 V5 H15 V6 H14 V7 H13 V8 H12 V9 H11 V8 H10 V7 H9 V6 H8 V5 H9 Z" fill="#ff0000"/><rect x="11" y="2" width="1" height="2" fill="#000"/><rect x="6" y="9" width="10" height="7" fill="#000"/><rect x="7" y="9" width="1" height="7" fill="#ffff00"/><rect x="14" y="9" width="1" height="7" fill="#ffff00"/><rect x="8" y="11" width="6" height="5" fill="#fff"/><rect x="8" y="9" width="6" height="1" fill="#fff"/></svg>
<svg style="position:absolute;left:1207px;top:171px" width="16" height="16" viewBox="0 0 16 16" shape-rendering="crispEdges"><path d="M0 0 H6 V1 H7 V2 H8 V3 H9 V11 H0 Z" fill="#000"/><path d="M1 1 H6 V3 H8 V10 H1 Z" fill="#fff"/><rect x="2" y="2" width="2" height="1" fill="#000"/><rect x="2" y="4" width="5" height="1" fill="#000"/><rect x="2" y="6" width="2" height="1" fill="#000"/><rect x="5" y="6" width="2" height="1" fill="#000"/><rect x="2" y="8" width="5" height="1" fill="#000"/><rect x="0" y="4" width="8" height="2" fill="#ff0000"/><rect x="0" y="9" width="8" height="2" fill="#ff0000"/><path d="M9 1 H11 V4 H16 V5 H15 V6 H14 V7 H13 V8 H12 V9 H11 V8 H10 V7 H9 V6 H8 V5 H9 Z" fill="#ff0000"/><rect x="11" y="2" width="1" height="2" fill="#000"/><rect x="6" y="9" width="10" height="7" fill="#000"/><rect x="7" y="9" width="1" height="7" fill="#ffff00"/><rect x="14" y="9" width="1" height="7" fill="#ffff00"/><rect x="8" y="11" width="6" height="5" fill="#fff"/><rect x="8" y="9" width="6" height="1" fill="#fff"/></svg>
<svg style="position:absolute;left:1230px;top:171px" width="16" height="16" viewBox="0 0 16 16" shape-rendering="crispEdges"><rect x="0" y="0" width="10" height="13" fill="#a9a8ae"/><rect x="3" y="4" width="4" height="5" fill="#f4f4f6"/><path d="M10 1 H11 V2 H12 V4 H13 V5 H14 V6 H13 V7 H12 V8 H11 V9 H12 V10 H13 V12 H12 V11 H11 V10 H10 Z" fill="#a9a8ae"/><path d="M5 14 H15 V16 H5 Z" fill="#c8c8cc"/><path d="M8 13 H10 V15 H8 Z M12 13 H14 V14 H12 Z" fill="#fff"/></svg>
<svg style="position:absolute;left:1253px;top:171px" width="16" height="16" viewBox="0 0 16 16" shape-rendering="crispEdges"><path d="M5 0 H10 V1 H12 V2 H13 V1 H15 V6 H10 V4 H12 V3 H10 V2 H5 V3 H3 V5 H2 V10 H3 V12 H5 V13 H10 V12 H12 V10 H13 V8 H15 V11 H14 V13 H12 V14 H10 V15 H5 V14 H3 V13 H2 V12 H1 V10 H0 V5 H1 V3 H2 V2 H3 V1 H5 Z" fill="#ff0000"/><rect x="7" y="3" width="2" height="6" fill="#000"/><rect x="6" y="4" width="4" height="4" fill="#000"/><rect x="7" y="10" width="2" height="2" fill="#000"/></svg>
<div style="position:absolute;left:2px;top:196px;width:1124px;height:1px;background:#a7a6aa"></div>
<div style="position:absolute;left:1126px;top:196px;width:154px;height:1px;background:#a7a6aa"></div>
<div style="position:absolute;left:2px;top:197px;width:1125px;height:36px;border-top:1px solid #fff;border-left:1px solid #fff;border-radius:4px 0 0 4px;border-bottom:1px solid #d6d5d9;border-right:1px solid #d6d5d9;box-sizing:border-box"></div>
<div style="position:absolute;left:7px;top:213px;font-size:12.5px;line-height:1;color:#000;font-weight:bold;white-space:nowrap;">Zoom H: 16</div>
<div style="position:absolute;left:81px;top:211px;width:907px;height:15px;background:#f0efe6;border:1px solid #cfcec6;border-left:1px solid #b8b7b0;border-top:1px solid #b8b7b0;box-sizing:border-box;border-radius:2px"></div>
<div style="position:absolute;left:148px;top:209px;width:9px;height:20px;border-radius:3px;background:linear-gradient(90deg,#dfe3ea,#fdfdfe 50%,#c8ccd6);border:1px solid #a2a8b4;box-sizing:border-box"></div>
<div style="position:absolute;left:149px;top:209px;width:7px;height:2px;background:#21a121;border-radius:2px 2px 0 0"></div>
<div style="position:absolute;left:149px;top:226px;width:7px;height:2px;background:#21a121;border-radius:0 0 2px 2px"></div>
<div style="position:absolute;left:998px;top:213px;font-size:12px;line-height:1;color:#000;font-weight:bold;white-space:nowrap;">256</div>
<div style="position:absolute;left:1029px;top:209px;width:33px;height:19px;background:#fff;border:1px solid #a8a8a8;"><div style="position:absolute;left:3px;top:4px;font-size:12px;line-height:1;color:#000;font-weight:bold;white-space:nowrap">34</div></div>
<div style="position:absolute;left:1066px;top:213px;font-size:12px;line-height:1;color:#000;font-weight:bold;white-space:nowrap;">x</div>
<div style="position:absolute;left:1076px;top:209px;width:29px;height:19px;background:#fff;border:1px solid #a8a8a8;"><div style="position:absolute;left:3px;top:4px;font-size:12px;line-height:1;color:#000;font-weight:bold;white-space:nowrap">1</div></div>
<div style="position:absolute;left:1108px;top:210px;width:14px;height:9px;border:1px solid #a3bde3;border-radius:3px;background:linear-gradient(#f4f8fe,#d0def6);box-sizing:border-box"><svg width="12" height="7" style="position:absolute;left:0;top:0"><path d="M2.5 5.5 L6.0 2.0 L9.5 5.5 Z" fill="#4d6185"/></svg></div>
<div style="position:absolute;left:1108px;top:219px;width:14px;height:10px;border:1px solid #a3bde3;border-radius:3px;background:linear-gradient(#f4f8fe,#d0def6);box-sizing:border-box"><svg width="12" height="8" style="position:absolute;left:0;top:0"><path d="M2.5 2.5 L6.0 6.0 L9.5 2.5 Z" fill="#4d6185"/></svg></div>
<div style="position:absolute;left:2px;top:236px;width:1097px;height:1px;background:#fff"></div>
<div style="position:absolute;left:2px;top:236px;width:1px;height:460px;background:#fff"></div>
<div style="position:absolute;left:1098px;top:237px;width:1px;height:459px;background:#d0cfd4"></div>
<div style="position:absolute;left:3px;top:695px;width:1096px;height:1px;background:#d0cfd4"></div>
<svg style="position:absolute;left:3px;top:237px" width="1095" height="458" viewBox="3 237 1095 458" shape-rendering="crispEdges"><rect x="3" y="237" width="1095" height="458" fill="#000"/><rect x="57" y="669" width="2" height="1" fill="#a4a4a4"/><line x1="60" y1="669.5" x2="1031" y2="669.5" stroke="#a4a4a4" stroke-width="1" stroke-dasharray="3 3"/><rect x="1033" y="669" width="2" height="1" fill="#a4a4a4"/><rect x="57" y="654" width="2" height="1" fill="#a4a4a4"/><line x1="60" y1="654.5" x2="1031" y2="654.5" stroke="#a4a4a4" stroke-width="1" stroke-dasharray="3 3"/><rect x="1033" y="654" width="2" height="1" fill="#a4a4a4"/><rect x="57" y="639" width="2" height="1" fill="#a4a4a4"/><line x1="60" y1="639.5" x2="1031" y2="639.5" stroke="#a4a4a4" stroke-width="1" stroke-dasharray="3 3"/><rect x="1033" y="639" width="2" height="1" fill="#a4a4a4"/><rect x="57" y="624" width="2" height="1" fill="#a4a4a4"/><line x1="60" y1="624.5" x2="1031" y2="624.5" stroke="#a4a4a4" stroke-width="1" stroke-dasharray="3 3"/><rect x="1033" y="624" width="2" height="1" fill="#a4a4a4"/><rect x="57" y="609" width="2" height="1" fill="#a4a4a4"/><line x1="60" y1="609.5" x2="1031" y2="609.5" stroke="#a4a4a4" stroke-width="1" stroke-dasharray="3 3"/><rect x="1033" y="609" width="2" height="1" fill="#a4a4a4"/><rect x="57" y="594" width="2" height="1" fill="#a4a4a4"/><line x1="60" y1="594.5" x2="1031" y2="594.5" stroke="#a4a4a4" stroke-width="1" stroke-dasharray="3 3"/><rect x="1033" y="594" width="2" height="1" fill="#a4a4a4"/><rect x="57" y="579" width="2" height="1" fill="#a4a4a4"/><line x1="60" y1="579.5" x2="1031" y2="579.5" stroke="#a4a4a4" stroke-width="1" stroke-dasharray="3 3"/><rect x="1033" y="579" width="2" height="1" fill="#a4a4a4"/><rect x="57" y="563" width="2" height="1" fill="#a4a4a4"/><line x1="60" y1="563.5" x2="1031" y2="563.5" stroke="#a4a4a4" stroke-width="1" stroke-dasharray="3 3"/><rect x="1033" y="563" width="2" height="1" fill="#a4a4a4"/><rect x="57" y="548" width="2" height="1" fill="#a4a4a4"/><line x1="60" y1="548.5" x2="1031" y2="548.5" stroke="#a4a4a4" stroke-width="1" stroke-dasharray="3 3"/><rect x="1033" y="548" width="2" height="1" fill="#a4a4a4"/><rect x="57" y="533" width="2" height="1" fill="#a4a4a4"/><line x1="60" y1="533.5" x2="1031" y2="533.5" stroke="#a4a4a4" stroke-width="1" stroke-dasharray="3 3"/><rect x="1033" y="533" width="2" height="1" fill="#a4a4a4"/><rect x="57" y="518" width="2" height="1" fill="#a4a4a4"/><line x1="60" y1="518.5" x2="1031" y2="518.5" stroke="#a4a4a4" stroke-width="1" stroke-dasharray="3 3"/><rect x="1033" y="518" width="2" height="1" fill="#a4a4a4"/><rect x="57" y="503" width="2" height="1" fill="#a4a4a4"/><line x1="60" y1="503.5" x2="1031" y2="503.5" stroke="#a4a4a4" stroke-width="1" stroke-dasharray="3 3"/><rect x="1033" y="503" width="2" height="1" fill="#a4a4a4"/><rect x="57" y="488" width="2" height="1" fill="#a4a4a4"/><line x1="60" y1="488.5" x2="1031" y2="488.5" stroke="#a4a4a4" stroke-width="1" stroke-dasharray="3 3"/><rect x="1033" y="488" width="2" height="1" fill="#a4a4a4"/><rect x="57" y="473" width="2" height="1" fill="#a4a4a4"/><line x1="60" y1="473.5" x2="1031" y2="473.5" stroke="#a4a4a4" stroke-width="1" stroke-dasharray="3 3"/><rect x="1033" y="473" width="2" height="1" fill="#a4a4a4"/><rect x="57" y="458" width="2" height="1" fill="#a4a4a4"/><line x1="60" y1="458.5" x2="1031" y2="458.5" stroke="#a4a4a4" stroke-width="1" stroke-dasharray="3 3"/><rect x="1033" y="458" width="2" height="1" fill="#a4a4a4"/><rect x="57" y="443" width="2" height="1" fill="#a4a4a4"/><line x1="60" y1="443.5" x2="1031" y2="443.5" stroke="#a4a4a4" stroke-width="1" stroke-dasharray="3 3"/><rect x="1033" y="443" width="2" height="1" fill="#a4a4a4"/><rect x="57" y="428" width="2" height="1" fill="#a4a4a4"/><line x1="60" y1="428.5" x2="1031" y2="428.5" stroke="#a4a4a4" stroke-width="1" stroke-dasharray="3 3"/><rect x="1033" y="428" width="2" height="1" fill="#a4a4a4"/><rect x="57" y="413" width="2" height="1" fill="#a4a4a4"/><line x1="60" y1="413.5" x2="1031" y2="413.5" stroke="#a4a4a4" stroke-width="1" stroke-dasharray="3 3"/><rect x="1033" y="413" width="2" height="1" fill="#a4a4a4"/><rect x="57" y="398" width="2" height="1" fill="#a4a4a4"/><line x1="60" y1="398.5" x2="1031" y2="398.5" stroke="#a4a4a4" stroke-width="1" stroke-dasharray="3 3"/><rect x="1033" y="398" width="2" height="1" fill="#a4a4a4"/><rect x="57" y="382" width="2" height="1" fill="#a4a4a4"/><line x1="60" y1="382.5" x2="1031" y2="382.5" stroke="#a4a4a4" stroke-width="1" stroke-dasharray="3 3"/><rect x="1033" y="382" width="2" height="1" fill="#a4a4a4"/><rect x="57" y="367" width="2" height="1" fill="#a4a4a4"/><line x1="60" y1="367.5" x2="1031" y2="367.5" stroke="#a4a4a4" stroke-width="1" stroke-dasharray="3 3"/><rect x="1033" y="367" width="2" height="1" fill="#a4a4a4"/><rect x="57" y="352" width="2" height="1" fill="#a4a4a4"/><line x1="60" y1="352.5" x2="1031" y2="352.5" stroke="#a4a4a4" stroke-width="1" stroke-dasharray="3 3"/><rect x="1033" y="352" width="2" height="1" fill="#a4a4a4"/><rect x="57" y="337" width="2" height="1" fill="#a4a4a4"/><line x1="60" y1="337.5" x2="1031" y2="337.5" stroke="#a4a4a4" stroke-width="1" stroke-dasharray="3 3"/><rect x="1033" y="337" width="2" height="1" fill="#a4a4a4"/><rect x="57" y="322" width="2" height="1" fill="#a4a4a4"/><line x1="60" y1="322.5" x2="1031" y2="322.5" stroke="#a4a4a4" stroke-width="1" stroke-dasharray="3 3"/><rect x="1033" y="322" width="2" height="1" fill="#a4a4a4"/><rect x="57" y="307" width="2" height="1" fill="#a4a4a4"/><line x1="60" y1="307.5" x2="1031" y2="307.5" stroke="#a4a4a4" stroke-width="1" stroke-dasharray="3 3"/><rect x="1033" y="307" width="2" height="1" fill="#a4a4a4"/><rect x="57" y="292" width="2" height="1" fill="#a4a4a4"/><line x1="60" y1="292.5" x2="1031" y2="292.5" stroke="#a4a4a4" stroke-width="1" stroke-dasharray="3 3"/><rect x="1033" y="292" width="2" height="1" fill="#a4a4a4"/><rect x="57" y="673" width="2" height="1" fill="#a4a4a4"/><rect x="1033" y="673" width="2" height="1" fill="#a4a4a4"/><rect x="57" y="669" width="2" height="1" fill="#a4a4a4"/><rect x="1033" y="669" width="2" height="1" fill="#a4a4a4"/><rect x="57" y="665" width="2" height="1" fill="#a4a4a4"/><rect x="1033" y="665" width="2" height="1" fill="#a4a4a4"/><rect x="57" y="662" width="2" height="1" fill="#a4a4a4"/><rect x="1033" y="662" width="2" height="1" fill="#a4a4a4"/><rect x="57" y="658" width="2" height="1" fill="#a4a4a4"/><rect x="1033" y="658" width="2" height="1" fill="#a4a4a4"/><rect x="57" y="654" width="2" height="1" fill="#a4a4a4"/><rect x="1033" y="654" width="2" height="1" fill="#a4a4a4"/><rect x="57" y="650" width="2" height="1" fill="#a4a4a4"/><rect x="1033" y="650" width="2" height="1" fill="#a4a4a4"/><rect x="57" y="647" width="2" height="1" fill="#a4a4a4"/><rect x="1033" y="647" width="2" height="1" fill="#a4a4a4"/><rect x="57" y="643" width="2" height="1" fill="#a4a4a4"/><rect x="1033" y="643" width="2" height="1" fill="#a4a4a4"/><rect x="57" y="639" width="2" height="1" fill="#a4a4a4"/><rect x="1033" y="639" width="2" height="1" fill="#a4a4a4"/><rect x="57" y="635" width="2" height="1" fill="#a4a4a4"/><rect x="1033" y="635" width="2" height="1" fill="#a4a4a4"/><rect x="57" y="632" width="2" height="1" fill="#a4a4a4"/><rect x="1033" y="632" width="2" height="1" fill="#a4a4a4"/><rect x="57" y="628" width="2" height="1" fill="#a4a4a4"/><rect x="1033" y="628" width="2" height="1" fill="#a4a4a4"/><rect x="57" y="624" width="2" height="1" fill="#a4a4a4"/><rect x="1033" y="624" width="2" height="1" fill="#a4a4a4"/><rect x="57" y="620" width="2" height="1" fill="#a4a4a4"/><rect x="1033" y="620" width="2" height="1" fill="#a4a4a4"/><rect x="57" y="616" width="2" height="1" fill="#a4a4a4"/><rect x="1033" y="616" width="2" height="1" fill="#a4a4a4"/><rect x="57" y="613" width="2" height="1" fill="#a4a4a4"/><rect x="1033" y="613" width="2" height="1" fill="#a4a4a4"/><rect x="57" y="609" width="2" height="1" fill="#a4a4a4"/><rect x="1033" y="609" width="2" height="1" fill="#a4a4a4"/><rect x="57" y="605" width="2" height="1" fill="#a4a4a4"/><rect x="1033" y="605" width="2" height="1" fill="#a4a4a4"/><rect x="57" y="601" width="2" height="1" fill="#a4a4a4"/><rect x="1033" y="601" width="2" height="1" fill="#a4a4a4"/><rect x="57" y="598" width="2" height="1" fill="#a4a4a4"/><rect x="1033" y="598" width="2" height="1" fill="#a4a4a4"/><rect x="57" y="594" width="2" height="1" fill="#a4a4a4"/><rect x="1033" y="594" width="2" height="1" fill="#a4a4a4"/><rect x="57" y="590" width="2" height="1" fill="#a4a4a4"/><rect x="1033" y="590" width="2" height="1" fill="#a4a4a4"/><rect x="57" y="586" width="2" height="1" fill="#a4a4a4"/><rect x="1033" y="586" width="2" height="1" fill="#a4a4a4"/><rect x="57" y="583" width="2" height="1" fill="#a4a4a4"/><rect x="1033" y="583" width="2" height="1" fill="#a4a4a4"/><rect x="57" y="579" width="2" height="1" fill="#a4a4a4"/><rect x="1033" y="579" width="2" height="1" fill="#a4a4a4"/><rect x="57" y="575" width="2" height="1" fill="#a4a4a4"/><rect x="1033" y="575" width="2" height="1" fill="#a4a4a4"/><rect x="57" y="571" width="2" height="1" fill="#a4a4a4"/><rect x="1033" y="571" width="2" height="1" fill="#a4a4a4"/><rect x="57" y="567" width="2" height="1" fill="#a4a4a4"/><rect x="1033" y="567" width="2" height="1" fill="#a4a4a4"/><rect x="57" y="564" width="2" height="1" fill="#a4a4a4"/><rect x="1033" y="564" width="2" height="1" fill="#a4a4a4"/><rect x="57" y="560" width="2" height="1" fill="#a4a4a4"/><rect x="1033" y="560" width="2" height="1" fill="#a4a4a4"/><rect x="57" y="556" width="2" height="1" fill="#a4a4a4"/><rect x="1033" y="556" width="2" height="1" fill="#a4a4a4"/><rect x="57" y="552" width="2" height="1" fill="#a4a4a4"/><rect x="1033" y="552" width="2" height="1" fill="#a4a4a4"/><rect x="57" y="549" width="2" height="1" fill="#a4a4a4"/><rect x="1033" y="549" width="2" height="1" fill="#a4a4a4"/><rect x="57" y="545" width="2" height="1" fill="#a4a4a4"/><rect x="1033" y="545" width="2" height="1" fill="#a4a4a4"/><rect x="57" y="541" width="2" height="1" fill="#a4a4a4"/><rect x="1033" y="541" width="2" height="1" fill="#a4a4a4"/><rect x="57" y="537" width="2" height="1" fill="#a4a4a4"/><rect x="1033" y="537" width="2" height="1" fill="#a4a4a4"/><rect x="57" y="534" width="2" height="1" fill="#a4a4a4"/><rect x="1033" y="534" width="2" height="1" fill="#a4a4a4"/><rect x="57" y="530" width="2" height="1" fill="#a4a4a4"/><rect x="1033" y="530" width="2" height="1" fill="#a4a4a4"/><rect x="57" y="526" width="2" height="1" fill="#a4a4a4"/><rect x="1033" y="526" width="2" height="1" fill="#a4a4a4"/><rect x="57" y="522" width="2" height="1" fill="#a4a4a4"/><rect x="1033" y="522" width="2" height="1" fill="#a4a4a4"/><rect x="57" y="518" width="2" height="1" fill="#a4a4a4"/><rect x="1033" y="518" width="2" height="1" fill="#a4a4a4"/><rect x="57" y="515" width="2" height="1" fill="#a4a4a4"/><rect x="1033" y="515" width="2" height="1" fill="#a4a4a4"/><rect x="57" y="511" width="2" height="1" fill="#a4a4a4"/><rect x="1033" y="511" width="2" height="1" fill="#a4a4a4"/><rect x="57" y="507" width="2" height="1" fill="#a4a4a4"/><rect x="1033" y="507" width="2" height="1" fill="#a4a4a4"/><rect x="57" y="503" width="2" height="1" fill="#a4a4a4"/><rect x="1033" y="503" width="2" height="1" fill="#a4a4a4"/><rect x="57" y="500" width="2" height="1" fill="#a4a4a4"/><rect x="1033" y="500" width="2" height="1" fill="#a4a4a4"/><rect x="57" y="496" width="2" height="1" fill="#a4a4a4"/><rect x="1033" y="496" width="2" height="1" fill="#a4a4a4"/><rect x="57" y="492" width="2" height="1" fill="#a4a4a4"/><rect x="1033" y="492" width="2" height="1" fill="#a4a4a4"/><rect x="57" y="488" width="2" height="1" fill="#a4a4a4"/><rect x="1033" y="488" width="2" height="1" fill="#a4a4a4"/><rect x="57" y="485" width="2" height="1" fill="#a4a4a4"/><rect x="1033" y="485" width="2" height="1" fill="#a4a4a4"/><rect x="57" y="481" width="2" height="1" fill="#a4a4a4"/><rect x="1033" y="481" width="2" height="1" fill="#a4a4a4"/><rect x="57" y="477" width="2" height="1" fill="#a4a4a4"/><rect x="1033" y="477" width="2" height="1" fill="#a4a4a4"/><rect x="57" y="473" width="2" height="1" fill="#a4a4a4"/><rect x="1033" y="473" width="2" height="1" fill="#a4a4a4"/><rect x="57" y="469" width="2" height="1" fill="#a4a4a4"/><rect x="1033" y="469" width="2" height="1" fill="#a4a4a4"/><rect x="57" y="466" width="2" height="1" fill="#a4a4a4"/><rect x="1033" y="466" width="2" height="1" fill="#a4a4a4"/><rect x="57" y="462" width="2" height="1" fill="#a4a4a4"/><rect x="1033" y="462" width="2" height="1" fill="#a4a4a4"/><rect x="57" y="458" width="2" height="1" fill="#a4a4a4"/><rect x="1033" y="458" width="2" height="1" fill="#a4a4a4"/><rect x="57" y="454" width="2" height="1" fill="#a4a4a4"/><rect x="1033" y="454" width="2" height="1" fill="#a4a4a4"/><rect x="57" y="451" width="2" height="1" fill="#a4a4a4"/><rect x="1033" y="451" width="2" height="1" fill="#a4a4a4"/><rect x="57" y="447" width="2" height="1" fill="#a4a4a4"/><rect x="1033" y="447" width="2" height="1" fill="#a4a4a4"/><rect x="57" y="443" width="2" height="1" fill="#a4a4a4"/><rect x="1033" y="443" width="2" height="1" fill="#a4a4a4"/><rect x="57" y="439" width="2" height="1" fill="#a4a4a4"/><rect x="1033" y="439" width="2" height="1" fill="#a4a4a4"/><rect x="57" y="435" width="2" height="1" fill="#a4a4a4"/><rect x="1033" y="435" width="2" height="1" fill="#a4a4a4"/><rect x="57" y="432" width="2" height="1" fill="#a4a4a4"/><rect x="1033" y="432" width="2" height="1" fill="#a4a4a4"/><rect x="57" y="428" width="2" height="1" fill="#a4a4a4"/><rect x="1033" y="428" width="2" height="1" fill="#a4a4a4"/><rect x="57" y="424" width="2" height="1" fill="#a4a4a4"/><rect x="1033" y="424" width="2" height="1" fill="#a4a4a4"/><rect x="57" y="420" width="2" height="1" fill="#a4a4a4"/><rect x="1033" y="420" width="2" height="1" fill="#a4a4a4"/><rect x="57" y="417" width="2" height="1" fill="#a4a4a4"/><rect x="1033" y="417" width="2" height="1" fill="#a4a4a4"/><rect x="57" y="413" width="2" height="1" fill="#a4a4a4"/><rect x="1033" y="413" width="2" height="1" fill="#a4a4a4"/><rect x="57" y="409" width="2" height="1" fill="#a4a4a4"/><rect x="1033" y="409" width="2" height="1" fill="#a4a4a4"/><rect x="57" y="405" width="2" height="1" fill="#a4a4a4"/><rect x="1033" y="405" width="2" height="1" fill="#a4a4a4"/><rect x="57" y="402" width="2" height="1" fill="#a4a4a4"/><rect x="1033" y="402" width="2" height="1" fill="#a4a4a4"/><rect x="57" y="398" width="2" height="1" fill="#a4a4a4"/><rect x="1033" y="398" width="2" height="1" fill="#a4a4a4"/><rect x="57" y="394" width="2" height="1" fill="#a4a4a4"/><rect x="1033" y="394" width="2" height="1" fill="#a4a4a4"/><rect x="57" y="390" width="2" height="1" fill="#a4a4a4"/><rect x="1033" y="390" width="2" height="1" fill="#a4a4a4"/><rect x="57" y="386" width="2" height="1" fill="#a4a4a4"/><rect x="1033" y="386" width="2" height="1" fill="#a4a4a4"/><rect x="57" y="383" width="2" height="1" fill="#a4a4a4"/><rect x="1033" y="383" width="2" height="1" fill="#a4a4a4"/><rect x="57" y="379" width="2" height="1" fill="#a4a4a4"/><rect x="1033" y="379" width="2" height="1" fill="#a4a4a4"/><rect x="57" y="375" width="2" height="1" fill="#a4a4a4"/><rect x="1033" y="375" width="2" height="1" fill="#a4a4a4"/><rect x="57" y="371" width="2" height="1" fill="#a4a4a4"/><rect x="1033" y="371" width="2" height="1" fill="#a4a4a4"/><rect x="57" y="368" width="2" height="1" fill="#a4a4a4"/><rect x="1033" y="368" width="2" height="1" fill="#a4a4a4"/><rect x="57" y="364" width="2" height="1" fill="#a4a4a4"/><rect x="1033" y="364" width="2" height="1" fill="#a4a4a4"/><rect x="57" y="360" width="2" height="1" fill="#a4a4a4"/><rect x="1033" y="360" width="2" height="1" fill="#a4a4a4"/><rect x="57" y="356" width="2" height="1" fill="#a4a4a4"/><rect x="1033" y="356" width="2" height="1" fill="#a4a4a4"/><rect x="57" y="353" width="2" height="1" fill="#a4a4a4"/><rect x="1033" y="353" width="2" height="1" fill="#a4a4a4"/><rect x="57" y="349" width="2" height="1" fill="#a4a4a4"/><rect x="1033" y="349" width="2" height="1" fill="#a4a4a4"/><rect x="57" y="345" width="2" height="1" fill="#a4a4a4"/><rect x="1033" y="345" width="2" height="1" fill="#a4a4a4"/><rect x="57" y="341" width="2" height="1" fill="#a4a4a4"/><rect x="1033" y="341" width="2" height="1" fill="#a4a4a4"/><rect x="57" y="337" width="2" height="1" fill="#a4a4a4"/><rect x="1033" y="337" width="2" height="1" fill="#a4a4a4"/><rect x="57" y="334" width="2" height="1" fill="#a4a4a4"/><rect x="1033" y="334" width="2" height="1" fill="#a4a4a4"/><rect x="57" y="330" width="2" height="1" fill="#a4a4a4"/><rect x="1033" y="330" width="2" height="1" fill="#a4a4a4"/><rect x="57" y="326" width="2" height="1" fill="#a4a4a4"/><rect x="1033" y="326" width="2" height="1" fill="#a4a4a4"/><rect x="57" y="322" width="2" height="1" fill="#a4a4a4"/><rect x="1033" y="322" width="2" height="1" fill="#a4a4a4"/><rect x="57" y="319" width="2" height="1" fill="#a4a4a4"/><rect x="1033" y="319" width="2" height="1" fill="#a4a4a4"/><rect x="57" y="315" width="2" height="1" fill="#a4a4a4"/><rect x="1033" y="315" width="2" height="1" fill="#a4a4a4"/><rect x="57" y="311" width="2" height="1" fill="#a4a4a4"/><rect x="1033" y="311" width="2" height="1" fill="#a4a4a4"/><rect x="57" y="307" width="2" height="1" fill="#a4a4a4"/><rect x="1033" y="307" width="2" height="1" fill="#a4a4a4"/><rect x="57" y="304" width="2" height="1" fill="#a4a4a4"/><rect x="1033" y="304" width="2" height="1" fill="#a4a4a4"/><rect x="57" y="300" width="2" height="1" fill="#a4a4a4"/><rect x="1033" y="300" width="2" height="1" fill="#a4a4a4"/><rect x="57" y="296" width="2" height="1" fill="#a4a4a4"/><rect x="1033" y="296" width="2" height="1" fill="#a4a4a4"/><rect x="57" y="292" width="2" height="1" fill="#a4a4a4"/><rect x="1033" y="292" width="2" height="1" fill="#a4a4a4"/><rect x="57" y="288" width="2" height="1" fill="#a4a4a4"/><rect x="1033" y="288" width="2" height="1" fill="#a4a4a4"/><rect x="57" y="285" width="2" height="1" fill="#a4a4a4"/><rect x="1033" y="285" width="2" height="1" fill="#a4a4a4"/><rect x="57" y="281" width="2" height="1" fill="#a4a4a4"/><rect x="1033" y="281" width="2" height="1" fill="#a4a4a4"/></svg>
<div style="position:absolute;left:-346.5px;width:400px;text-align:right;top:664px;font-size:11px;line-height:1;color:#fff;font-weight:normal;white-space:nowrap;letter-spacing:-0.3px;">0</div>
<div style="position:absolute;left:1036px;top:664px;font-size:11px;line-height:1;color:#fff;font-weight:normal;white-space:nowrap;letter-spacing:-0.3px;">0</div>
<div style="position:absolute;left:-346.5px;width:400px;text-align:right;top:649px;font-size:11px;line-height:1;color:#fff;font-weight:normal;white-space:nowrap;letter-spacing:-0.3px;">1</div>
<div style="position:absolute;left:1036px;top:649px;font-size:11px;line-height:1;color:#fff;font-weight:normal;white-space:nowrap;letter-spacing:-0.3px;">1</div>
<div style="position:absolute;left:-346.5px;width:400px;text-align:right;top:634px;font-size:11px;line-height:1;color:#fff;font-weight:normal;white-space:nowrap;letter-spacing:-0.3px;">2</div>
<div style="position:absolute;left:1036px;top:634px;font-size:11px;line-height:1;color:#fff;font-weight:normal;white-space:nowrap;letter-spacing:-0.3px;">2</div>
<div style="position:absolute;left:-346.5px;width:400px;text-align:right;top:619px;font-size:11px;line-height:1;color:#fff;font-weight:normal;white-space:nowrap;letter-spacing:-0.3px;">3</div>
<div style="position:absolute;left:1036px;top:619px;font-size:11px;line-height:1;color:#fff;font-weight:normal;white-space:nowrap;letter-spacing:-0.3px;">3</div>
<div style="position:absolute;left:-346.5px;width:400px;text-align:right;top:604px;font-size:11px;line-height:1;color:#fff;font-weight:normal;white-space:nowrap;letter-spacing:-0.3px;">4</div>
<div style="position:absolute;left:1036px;top:604px;font-size:11px;line-height:1;color:#fff;font-weight:normal;white-space:nowrap;letter-spacing:-0.3px;">4</div>
<div style="position:absolute;left:-346.5px;width:400px;text-align:right;top:589px;font-size:11px;line-height:1;color:#fff;font-weight:normal;white-space:nowrap;letter-spacing:-0.3px;">5</div>
<div style="position:absolute;left:1036px;top:589px;font-size:11px;line-height:1;color:#fff;font-weight:normal;white-space:nowrap;letter-spacing:-0.3px;">5</div>
<div style="position:absolute;left:-346.5px;width:400px;text-align:right;top:574px;font-size:11px;line-height:1;color:#fff;font-weight:normal;white-space:nowrap;letter-spacing:-0.3px;">6</div>
<div style="position:absolute;left:1036px;top:574px;font-size:11px;line-height:1;color:#fff;font-weight:normal;white-space:nowrap;letter-spacing:-0.3px;">6</div>
<div style="position:absolute;left:-346.5px;width:400px;text-align:right;top:558px;font-size:11px;line-height:1;color:#fff;font-weight:normal;white-space:nowrap;letter-spacing:-0.3px;">7</div>
<div style="position:absolute;left:1036px;top:558px;font-size:11px;line-height:1;color:#fff;font-weight:normal;white-space:nowrap;letter-spacing:-0.3px;">7</div>
<div style="position:absolute;left:-346.5px;width:400px;text-align:right;top:543px;font-size:11px;line-height:1;color:#fff;font-weight:normal;white-space:nowrap;letter-spacing:-0.3px;">8</div>
<div style="position:absolute;left:1036px;top:543px;font-size:11px;line-height:1;color:#fff;font-weight:normal;white-space:nowrap;letter-spacing:-0.3px;">8</div>
<div style="position:absolute;left:-346.5px;width:400px;text-align:right;top:528px;font-size:11px;line-height:1;color:#fff;font-weight:normal;white-space:nowrap;letter-spacing:-0.3px;">9</div>
<div style="position:absolute;left:1036px;top:528px;font-size:11px;line-height:1;color:#fff;font-weight:normal;white-space:nowrap;letter-spacing:-0.3px;">9</div>
<div style="position:absolute;left:-346.5px;width:400px;text-align:right;top:513px;font-size:11px;line-height:1;color:#fff;font-weight:normal;white-space:nowrap;letter-spacing:-0.3px;">10</div>
<div style="position:absolute;left:1036px;top:513px;font-size:11px;line-height:1;color:#fff;font-weight:normal;white-space:nowrap;letter-spacing:-0.3px;">10</div>
<div style="position:absolute;left:-346.5px;width:400px;text-align:right;top:498px;font-size:11px;line-height:1;color:#fff;font-weight:normal;white-space:nowrap;letter-spacing:-0.3px;">11</div>
<div style="position:absolute;left:1036px;top:498px;font-size:11px;line-height:1;color:#fff;font-weight:normal;white-space:nowrap;letter-spacing:-0.3px;">11</div>
<div style="position:absolute;left:-346.5px;width:400px;text-align:right;top:483px;font-size:11px;line-height:1;color:#fff;font-weight:normal;white-space:nowrap;letter-spacing:-0.3px;">12</div>
<div style="position:absolute;left:1036px;top:483px;font-size:11px;line-height:1;color:#fff;font-weight:normal;white-space:nowrap;letter-spacing:-0.3px;">12</div>
<div style="position:absolute;left:-346.5px;width:400px;text-align:right;top:468px;font-size:11px;line-height:1;color:#fff;font-weight:normal;white-space:nowrap;letter-spacing:-0.3px;">13</div>
<div style="position:absolute;left:1036px;top:468px;font-size:11px;line-height:1;color:#fff;font-weight:normal;white-space:nowrap;letter-spacing:-0.3px;">13</div>
<div style="position:absolute;left:-346.5px;width:400px;text-align:right;top:453px;font-size:11px;line-height:1;color:#fff;font-weight:normal;white-space:nowrap;letter-spacing:-0.3px;">14</div>
<div style="position:absolute;left:1036px;top:453px;font-size:11px;line-height:1;color:#fff;font-weight:normal;white-space:nowrap;letter-spacing:-0.3px;">14</div>
<div style="position:absolute;left:-346.5px;width:400px;text-align:right;top:438px;font-size:11px;line-height:1;color:#fff;font-weight:normal;white-space:nowrap;letter-spacing:-0.3px;">15</div>
<div style="position:absolute;left:1036px;top:438px;font-size:11px;line-height:1;color:#fff;font-weight:normal;white-space:nowrap;letter-spacing:-0.3px;">15</div>
<div style="position:absolute;left:-346.5px;width:400px;text-align:right;top:423px;font-size:11px;line-height:1;color:#fff;font-weight:normal;white-space:nowrap;letter-spacing:-0.3px;">16</div>
<div style="position:absolute;left:1036px;top:423px;font-size:11px;line-height:1;color:#fff;font-weight:normal;white-space:nowrap;letter-spacing:-0.3px;">16</div>
<div style="position:absolute;left:-346.5px;width:400px;text-align:right;top:408px;font-size:11px;line-height:1;color:#fff;font-weight:normal;white-space:nowrap;letter-spacing:-0.3px;">17</div>
<div style="position:absolute;left:1036px;top:408px;font-size:11px;line-height:1;color:#fff;font-weight:normal;white-space:nowrap;letter-spacing:-0.3px;">17</div>
<div style="position:absolute;left:-346.5px;width:400px;text-align:right;top:393px;font-size:11px;line-height:1;color:#fff;font-weight:normal;white-space:nowrap;letter-spacing:-0.3px;">18</div>
<div style="position:absolute;left:1036px;top:393px;font-size:11px;line-height:1;color:#fff;font-weight:normal;white-space:nowrap;letter-spacing:-0.3px;">18</div>
<div style="position:absolute;left:-346.5px;width:400px;text-align:right;top:377px;font-size:11px;line-height:1;color:#fff;font-weight:normal;white-space:nowrap;letter-spacing:-0.3px;">19</div>
<div style="position:absolute;left:1036px;top:377px;font-size:11px;line-height:1;color:#fff;font-weight:normal;white-space:nowrap;letter-spacing:-0.3px;">19</div>
<div style="position:absolute;left:-346.5px;width:400px;text-align:right;top:362px;font-size:11px;line-height:1;color:#fff;font-weight:normal;white-space:nowrap;letter-spacing:-0.3px;">20</div>
<div style="position:absolute;left:1036px;top:362px;font-size:11px;line-height:1;color:#fff;font-weight:normal;white-space:nowrap;letter-spacing:-0.3px;">20</div>
<div style="position:absolute;left:-346.5px;width:400px;text-align:right;top:347px;font-size:11px;line-height:1;color:#fff;font-weight:normal;white-space:nowrap;letter-spacing:-0.3px;">21</div>
<div style="position:absolute;left:1036px;top:347px;font-size:11px;line-height:1;color:#fff;font-weight:normal;white-space:nowrap;letter-spacing:-0.3px;">21</div>
<div style="position:absolute;left:-346.5px;width:400px;text-align:right;top:332px;font-size:11px;line-height:1;color:#fff;font-weight:normal;white-space:nowrap;letter-spacing:-0.3px;">22</div>
<div style="position:absolute;left:1036px;top:332px;font-size:11px;line-height:1;color:#fff;font-weight:normal;white-space:nowrap;letter-spacing:-0.3px;">22</div>
<div style="position:absolute;left:-346.5px;width:400px;text-align:right;top:317px;font-size:11px;line-height:1;color:#fff;font-weight:normal;white-space:nowrap;letter-spacing:-0.3px;">23</div>
<div style="position:absolute;left:1036px;top:317px;font-size:11px;line-height:1;color:#fff;font-weight:normal;white-space:nowrap;letter-spacing:-0.3px;">23</div>
<div style="position:absolute;left:-346.5px;width:400px;text-align:right;top:302px;font-size:11px;line-height:1;color:#fff;font-weight:normal;white-space:nowrap;letter-spacing:-0.3px;">24</div>
<div style="position:absolute;left:1036px;top:302px;font-size:11px;line-height:1;color:#fff;font-weight:normal;white-space:nowrap;letter-spacing:-0.3px;">24</div>
<div style="position:absolute;left:-346.5px;width:400px;text-align:right;top:287px;font-size:11px;line-height:1;color:#fff;font-weight:normal;white-space:nowrap;letter-spacing:-0.3px;">25</div>
<div style="position:absolute;left:1036px;top:287px;font-size:11px;line-height:1;color:#fff;font-weight:normal;white-space:nowrap;letter-spacing:-0.3px;">25</div>
<svg style="position:absolute;left:0;top:0" width="1100" height="700" shape-rendering="crispEdges"><polyline points="435.3,639.3 463.1,548.9 490.9,533.8" fill="none" stroke="#0000ff" stroke-width="1"/><polyline points="73.9,669.5 101.7,654.4 129.5,654.4 157.3,654.4 185.1,654.4 212.9,654.4 240.7,518.7 268.5,639.3 296.3,639.3 324.1,669.5 351.9,669.5 379.7,669.5 407.5,669.5 435.3,639.3 463.1,669.5 490.9,533.8 518.7,669.5 546.5,669.5 574.3,669.5 602.1,669.5 629.9,669.5 657.7,669.5 685.5,669.5 713.3,669.5 741.1,473.5 768.9,639.3 796.7,654.4 824.5,654.4 852.3,624.3 880.1,669.5 907.9,669.5 935.7,654.4 963.5,654.4 991.3,458.4" fill="none" stroke="#ff0000" stroke-width="1"/><rect x="462" y="284" width="2" height="386" fill="#00ff00"/></svg>
<div style="position:absolute;left:261px;width:400px;text-align:center;top:680px;font-size:11px;line-height:1;color:#fff;font-weight:normal;white-space:nowrap;letter-spacing:-0.2px;">1C6E5A</div>
<div style="position:absolute;left:1104px;top:239px;width:19px;height:460px;background:linear-gradient(90deg,#dce9fb,#f4f8fe 60%,#fdfeff);border-left:1px solid #a7a6aa;border-top:1px solid #a7a6aa;border-right:1px solid #d8e6f8;border-bottom:1px solid #fff;box-sizing:border-box"></div>
<div style="position:absolute;left:1105px;top:240px;width:17px;height:17px;border:1px solid #a2b6da;border-radius:3px;background:linear-gradient(#fbfdff,#e4edfb 45%,#c4d6f2);box-sizing:border-box"><svg width="15" height="15" style="position:absolute;left:0;top:0" viewBox="0 0 15 15"><path d="M4.5 9.5 L8 6 L11.5 9.5" transform="translate(0.0,0.0)" stroke="#4d5a70" stroke-width="2" fill="none"/></svg></div>
<div style="position:absolute;left:1105px;top:257px;width:17px;height:17px;border:1px solid #b3c3e4;border-radius:2px;background:linear-gradient(90deg,#c9d8f5,#e9f0fd 50%,#c6d6f4);box-sizing:border-box"><svg width="15" height="15" style="position:absolute;left:0;top:0"><path d="M4 5.5 H11 M4 7.5 H11 M4 9.5 H11" stroke="#8ea2c8" stroke-width="1"/></svg></div>
<div style="position:absolute;left:1105px;top:682px;width:17px;height:17px;border:1px solid #a2b6da;border-radius:3px;background:linear-gradient(#fbfdff,#e4edfb 45%,#c4d6f2);box-sizing:border-box"><svg width="15" height="15" style="position:absolute;left:0;top:0" viewBox="0 0 15 15"><path d="M4.5 6.5 L8 10 L11.5 6.5" transform="translate(0.0,0.0)" stroke="#4d5a70" stroke-width="2" fill="none"/></svg></div>
<div style="position:absolute;left:1127px;top:204px;width:150px;height:47px;border:1px solid #d0d0c8;border-radius:5px;"></div>
<div style="position:absolute;left:1138px;top:199px;padding:0 2px;background:#ebe9ed;font-size:11.8px;line-height:1;color:#2452a8;font-weight:bold;white-space:nowrap;">Cursore</div>
<div style="position:absolute;left:1250px;top:197px;width:22px;height:22px;background:#fff;border-top:2px solid #a0a0a4;border-left:2px solid #a0a0a4;border-right:1px solid #e0e0e4;border-bottom:1px solid #e0e0e4;box-sizing:border-box;box-shadow:1px 1px 0 #fff"></div>
<svg style="position:absolute;left:1254px;top:201px" width="14" height="15" viewBox="0 0 14 15" shape-rendering="crispEdges"><rect x="4" y="0" width="5" height="1" fill="#000"/><rect x="3" y="1" width="1" height="1" fill="#000"/><rect x="9" y="1" width="1" height="1" fill="#000"/><rect x="2" y="2" width="1" height="4" fill="#000"/><rect x="10" y="2" width="1" height="4" fill="#000"/><rect x="4" y="1" width="5" height="1" fill="#c8c8c8"/><rect x="3" y="2" width="1" height="4" fill="#c8c8c8"/><rect x="9" y="2" width="1" height="4" fill="#c8c8c8"/><rect x="5" y="2" width="3" height="1" fill="#000"/><rect x="4" y="3" width="1" height="3" fill="#000"/><rect x="8" y="3" width="1" height="3" fill="#000"/><path d="M1 6 H12 V7 H13 V12 H12 V13 H11 V14 H2 V13 H1 V12 H0 V7 H1 Z" fill="#000"/><rect x="1" y="7" width="11" height="5" fill="#b0b0b0"/><rect x="2" y="12" width="9" height="1" fill="#b0b0b0"/><rect x="1" y="8" width="11" height="1" fill="#e4e4e4"/><rect x="1" y="10" width="11" height="1" fill="#e4e4e4"/><rect x="5" y="8" width="3" height="2" fill="#000"/><rect x="6" y="10" width="1" height="3" fill="#000"/></svg>
<div style="position:absolute;left:1131px;top:214px;width:13px;height:13px;border:1px solid #1c5180;background:linear-gradient(135deg,#dcdcd7,#fff);box-sizing:border-box"><svg width="11" height="11" style="position:absolute;left:0;top:0"></svg></div>
<div style="position:absolute;left:1147px;top:215px;font-size:12px;line-height:1;color:#000;font-weight:bold;white-space:nowrap;letter-spacing:0.3px">ORI &gt;&gt; MOD</div>
<div style="position:absolute;left:1131px;top:230px;width:13px;height:13px;border:1px solid #1c5180;background:linear-gradient(135deg,#dcdcd7,#fff);box-sizing:border-box"><svg width="11" height="11" style="position:absolute;left:0;top:0"><path d="M2.5 6 L5 8.5 L10 3" stroke="#21a121" stroke-width="2" fill="none"/></svg></div>
<div style="position:absolute;left:1147px;top:231px;font-size:12px;line-height:1;color:#000;font-weight:bold;white-space:nowrap;letter-spacing:0.3px">Max var.</div>
<div style="position:absolute;left:1207px;top:227px;width:32px;height:19px;background:#fff;border:1px solid #a8a8a8;"><div style="position:absolute;left:3px;top:4px;font-size:12px;line-height:1;color:#000;font-weight:bold;white-space:nowrap">15</div></div>
<div style="position:absolute;left:1242px;top:228px;width:14px;height:10px;border:1px solid #a3bde3;border-radius:3px;background:linear-gradient(#f4f8fe,#d0def6);box-sizing:border-box"><svg width="12" height="8" style="position:absolute;left:0;top:0"><path d="M2.5 6.0 L6.0 2.5 L9.5 6.0 Z" fill="#4d6185"/></svg></div>
<div style="position:absolute;left:1242px;top:238px;width:14px;height:10px;border:1px solid #a3bde3;border-radius:3px;background:linear-gradient(#f4f8fe,#d0def6);box-sizing:border-box"><svg width="12" height="8" style="position:absolute;left:0;top:0"><path d="M2.5 2.5 L6.0 6.0 L9.5 2.5 Z" fill="#4d6185"/></svg></div>
<div style="position:absolute;left:1127px;top:261px;width:150px;height:218px;border:1px solid #d0d0c8;border-radius:5px;"></div>
<div style="position:absolute;left:1137px;top:256px;padding:0 2px;background:#ebe9ed;font-size:12.1px;line-height:1;color:#2452a8;font-weight:bold;white-space:nowrap;">Visualizzazione</div>
<div style="position:absolute;left:1133px;top:273px;width:142px;height:139px;border-top:1px solid #fff;border-left:1px solid #fff;border-right:1px solid #c5c4c8;border-bottom:1px solid #c5c4c8;box-sizing:border-box"></div>
<div style="position:absolute;left:1133px;top:302px;width:142px;height:1px;background:#c5c4c8"></div>
<div style="position:absolute;left:1133px;top:303px;width:142px;height:1px;background:#fff"></div>
<div style="position:absolute;left:1133px;top:378px;width:142px;height:1px;background:#c5c4c8"></div>
<div style="position:absolute;left:1133px;top:379px;width:142px;height:1px;background:#fff"></div>
<svg style="position:absolute;left:1137.0px;top:283.0px" width="13" height="13"><defs><linearGradient id="rg" x1="0" y1="0" x2="1" y2="1"><stop offset="0" stop-color="#dcdcd7"/><stop offset="1" stop-color="#fff"/></linearGradient></defs><circle cx="6.5" cy="6.5" r="5.8" fill="url(#rg)" stroke="#1c5180" stroke-width="1"/></svg>
<div style="position:absolute;left:1153px;top:284px;font-size:12px;line-height:1;color:#000;font-weight:bold;white-space:nowrap;letter-spacing:0.3px">IEEE</div>
<svg style="position:absolute;left:1195.0px;top:283.0px" width="13" height="13"><defs><linearGradient id="rg" x1="0" y1="0" x2="1" y2="1"><stop offset="0" stop-color="#dcdcd7"/><stop offset="1" stop-color="#fff"/></linearGradient></defs><circle cx="6.5" cy="6.5" r="5.8" fill="url(#rg)" stroke="#1c5180" stroke-width="1"/><circle cx="6.5" cy="6.5" r="2.2" fill="#21a121"/></svg>
<div style="position:absolute;left:1212px;top:284px;font-size:11.8px;line-height:1;color:#000;font-weight:bold;white-space:nowrap;">Motorola</div>
<svg style="position:absolute;left:1137.0px;top:308.0px" width="13" height="13"><defs><linearGradient id="rg" x1="0" y1="0" x2="1" y2="1"><stop offset="0" stop-color="#dcdcd7"/><stop offset="1" stop-color="#fff"/></linearGradient></defs><circle cx="6.5" cy="6.5" r="5.8" fill="url(#rg)" stroke="#1c5180" stroke-width="1"/><circle cx="6.5" cy="6.5" r="2.2" fill="#21a121"/></svg>
<div style="position:absolute;left:1153px;top:309px;font-size:12px;line-height:1;color:#000;font-weight:bold;white-space:nowrap;">8 bit</div>
<div style="position:absolute;left:1224px;top:308px;width:13px;height:13px;border:1px solid #1c5180;background:linear-gradient(135deg,#dcdcd7,#fff);box-sizing:border-box"><svg width="11" height="11" style="position:absolute;left:0;top:0"></svg></div>
<div style="position:absolute;left:1241px;top:309px;font-size:12px;line-height:1;color:#000;font-weight:bold;white-space:nowrap;letter-spacing:1px">+/-</div>
<svg style="position:absolute;left:1137.0px;top:326.0px" width="13" height="13"><defs><linearGradient id="rg" x1="0" y1="0" x2="1" y2="1"><stop offset="0" stop-color="#dcdcd7"/><stop offset="1" stop-color="#fff"/></linearGradient></defs><circle cx="6.5" cy="6.5" r="5.8" fill="url(#rg)" stroke="#1c5180" stroke-width="1"/></svg>
<div style="position:absolute;left:1153px;top:327px;font-size:12px;line-height:1;color:#000;font-weight:bold;white-space:nowrap;">16 bit</div>
<svg style="position:absolute;left:1137.0px;top:344.0px" width="13" height="13"><defs><linearGradient id="rg" x1="0" y1="0" x2="1" y2="1"><stop offset="0" stop-color="#dcdcd7"/><stop offset="1" stop-color="#fff"/></linearGradient></defs><circle cx="6.5" cy="6.5" r="5.8" fill="url(#rg)" stroke="#1c5180" stroke-width="1"/></svg>
<div style="position:absolute;left:1153px;top:345px;font-size:12px;line-height:1;color:#000;font-weight:bold;white-space:nowrap;">32 bit</div>
<svg style="position:absolute;left:1137.0px;top:362.0px" width="13" height="13"><defs><linearGradient id="rg" x1="0" y1="0" x2="1" y2="1"><stop offset="0" stop-color="#dcdcd7"/><stop offset="1" stop-color="#fff"/></linearGradient></defs><circle cx="6.5" cy="6.5" r="5.8" fill="url(#rg)" stroke="#1c5180" stroke-width="1"/></svg>
<div style="position:absolute;left:1153px;top:362px;font-size:11.6px;line-height:1;color:#000;font-weight:bold;white-space:nowrap;">Virgola mobile</div>
<div style="position:absolute;left:1137px;top:390px;font-size:11.8px;line-height:1;color:#000;font-weight:bold;white-space:nowrap;">Allineamento:</div>
<div style="position:absolute;left:1225px;top:386px;width:39px;height:20px;background:#fff;border:1px solid #a8a8a8;"><div style="position:absolute;left:5px;top:4px;font-size:12px;line-height:1;color:#000;font-weight:bold;white-space:nowrap">0</div></div>
<div style="position:absolute;left:1249px;top:388px;width:13px;height:18px;border:1px solid #4a6a9a;border-radius:2px;background:linear-gradient(#dce6f8,#b6c8ec);box-sizing:border-box"><svg width="11" height="16" style="position:absolute;left:0;top:0"><path d="M2 7 L5.5 3 L9 7 Z M2 9 L5.5 13 L9 9 Z" fill="#000"/></svg></div>
<div style="position:absolute;left:1137px;top:420px;width:13px;height:13px;border:1px solid #1c5180;background:linear-gradient(135deg,#dcdcd7,#fff);box-sizing:border-box"><svg width="11" height="11" style="position:absolute;left:0;top:0"><path d="M2.5 6 L5 8.5 L10 3" stroke="#21a121" stroke-width="2" fill="none"/></svg></div>
<div style="position:absolute;left:1153px;top:421px;font-size:12px;line-height:1;color:#000;font-weight:bold;white-space:nowrap;">Usa info driver</div>
<div style="position:absolute;left:1137px;top:436px;width:13px;height:13px;border:1px solid #1c5180;background:linear-gradient(135deg,#dcdcd7,#fff);box-sizing:border-box"><svg width="11" height="11" style="position:absolute;left:0;top:0"><path d="M2.5 6 L5 8.5 L10 3" stroke="#21a121" stroke-width="2" fill="none"/></svg></div>
<div style="position:absolute;left:1153px;top:437px;font-size:11.8px;line-height:1;color:#000;font-weight:bold;white-space:nowrap;">Usa ultima mappa</div>
<div style="position:absolute;left:1134px;top:461px;font-size:11.5px;line-height:1;color:#000;font-weight:bold;white-space:nowrap;">Zoom V:</div>
<div style="position:absolute;left:1188px;top:456px;width:76px;height:15px;background:#f0efe6;border:1px solid #cfcec6;border-left:1px solid #b8b7b0;border-top:1px solid #b8b7b0;box-sizing:border-box;border-radius:2px"></div>
<div style="position:absolute;left:1256px;top:455px;width:9px;height:19px;border-radius:3px;background:linear-gradient(90deg,#dfe3ea,#fdfdfe 50%,#c8ccd6);border:1px solid #a2a8b4;box-sizing:border-box"></div>
<div style="position:absolute;left:1257px;top:455px;width:7px;height:2px;background:#21a121"></div>
<div style="position:absolute;left:1257px;top:471px;width:7px;height:2px;background:#21a121"></div>
<div style="position:absolute;left:1127px;top:671px;width:150px;height:77px;border:1px solid #d0d0c8;border-radius:5px;"></div>
<div style="position:absolute;left:1135px;top:666px;padding:0 2px;background:#ebe9ed;font-size:12.1px;line-height:1;color:#2452a8;font-weight:bold;white-space:nowrap;">Memo indirizzi</div>
<div style="position:absolute;left:1136px;top:679px;width:123px;height:70px;border-top:1px solid #a0a0a0;border-left:1px solid #a0a0a0;box-sizing:border-box"></div>
<div style="position:absolute;left:951px;width:400px;text-align:center;top:688px;font-size:12.5px;line-height:1;color:#a8a8a8;font-weight:bold;white-space:nowrap;">1</div>
<div style="position:absolute;left:974px;width:400px;text-align:center;top:688px;font-size:12.5px;line-height:1;color:#a8a8a8;font-weight:bold;white-space:nowrap;">2</div>
<div style="position:absolute;left:997px;width:400px;text-align:center;top:688px;font-size:12.5px;line-height:1;color:#a8a8a8;font-weight:bold;white-space:nowrap;">3</div>
<div style="position:absolute;left:1020px;width:400px;text-align:center;top:688px;font-size:12.5px;line-height:1;color:#a8a8a8;font-weight:bold;white-space:nowrap;">4</div>
<div style="position:absolute;left:1044px;width:400px;text-align:center;top:688px;font-size:12.5px;line-height:1;color:#a8a8a8;font-weight:bold;white-space:nowrap;">5</div>
<div style="position:absolute;left:951px;width:400px;text-align:center;top:710px;font-size:12.5px;line-height:1;color:#a8a8a8;font-weight:bold;white-space:nowrap;">6</div>
<div style="position:absolute;left:974px;width:400px;text-align:center;top:710px;font-size:12.5px;line-height:1;color:#a8a8a8;font-weight:bold;white-space:nowrap;">7</div>
<div style="position:absolute;left:997px;width:400px;text-align:center;top:710px;font-size:12.5px;line-height:1;color:#a8a8a8;font-weight:bold;white-space:nowrap;">8</div>
<div style="position:absolute;left:1020px;width:400px;text-align:center;top:710px;font-size:12.5px;line-height:1;color:#a8a8a8;font-weight:bold;white-space:nowrap;">9</div>
<div style="position:absolute;left:1044px;width:400px;text-align:center;top:710px;font-size:12.5px;line-height:1;color:#a8a8a8;font-weight:bold;white-space:nowrap;">10</div>
<div style="position:absolute;left:951px;width:400px;text-align:center;top:732px;font-size:12.5px;line-height:1;color:#a8a8a8;font-weight:bold;white-space:nowrap;">11</div>
<div style="position:absolute;left:974px;width:400px;text-align:center;top:732px;font-size:12.5px;line-height:1;color:#a8a8a8;font-weight:bold;white-space:nowrap;">12</div>
<svg style="position:absolute;left:1190px;top:730px" width="16" height="16" viewBox="0 0 16 16" shape-rendering="crispEdges"><path d="M6 0 H12 L15 3 V16 H6 Z" fill="#000"/><path d="M7 1 H11 V4 H14 V15 H7 Z" fill="#fff"/><path d="M11 1 L14 4 H11 Z" fill="#fff"/><rect x="9" y="4" width="2" height="1" fill="#000"/><rect x="10" y="6" width="3" height="1" fill="#000"/><rect x="10" y="9" width="3" height="1" fill="#000"/><rect x="9" y="13" width="3" height="1" fill="#000"/><path d="M1 0 H2 V1 H3 V2 H4 V3 H5 V4 H6 V5 H7 V6 H8 V7 H9 V8 H10 V9 H11 V11 H9 V10 H8 V9 H7 V8 H6 V7 H5 V6 H4 V5 H3 V4 H2 V3 H1 Z" fill="#000"/><path d="M2 1 V2 H3 V3 H4 V4 H5 V5 H6 V6 H7 V7 H8 V8 H9 V9 H10 V10 H9 V9 H8 V8 H7 V7 H6 V6 H5 V5 H4 V4 H3 V3 H2 Z" fill="#ffff00"/><rect x="1" y="1" width="1" height="1" fill="#ff0000"/><path d="M0 7 H1 V6 H6 V7 H8 V8 H10 V9 H11 V10 H6 V13 H1 V12 H0 Z" fill="#000"/><path d="M2 7 H5 V8 H7 V9 H9 V10 H5 V12 H2 Z" fill="#ffff00"/><path d="M3 8 H4 V9 H3 Z M2 10 H3 V11 H2 Z M4 10 H5 V11 H4 Z" fill="#fff"/><rect x="0" y="8" width="1" height="4" fill="#00ffff"/></svg>
<div style="position:absolute;left:3px;top:704px;width:21px;height:40px;border:1px solid #3d5d8f;border-radius:4px;background:linear-gradient(#fbfdfe 0%,#eef3f6 45%,#e3eaf1 66%,#cfd9e7 68%,#bccade 90%,#a9b9d2 100%);box-shadow:inset 1px 1px 0 #fff,inset -1px -1px 0 rgba(255,255,255,0.5);overflow:hidden"><svg style="position:absolute;left:0;top:-1px" width="21" height="41" ><rect x="2.5" y="17" width="2" height="7" fill="#000"/><path d="M4.5 20.5 L9 17 V24 Z M9 20.5 L13.5 17 V24 Z" fill="#000"/></svg></div>
<div style="position:absolute;left:28px;top:704px;width:21px;height:40px;border:1px solid #3d5d8f;border-radius:4px;background:linear-gradient(#fbfdfe 0%,#eef3f6 45%,#e3eaf1 66%,#cfd9e7 68%,#bccade 90%,#a9b9d2 100%);box-shadow:inset 1px 1px 0 #fff,inset -1px -1px 0 rgba(255,255,255,0.5);overflow:hidden"><svg style="position:absolute;left:0;top:-1px" width="21" height="41" ><path d="M4 20.5 L8 17 V24 Z" fill="#000"/><rect x="10" y="17" width="2" height="7" fill="#0000ff"/></svg></div>
<div style="position:absolute;left:52px;top:704px;width:686px;height:22px;background:linear-gradient(#dfecfc,#f9fbfe);border-top:1px solid #a0a0a0;border-left:1px solid #a0a0a0;border-bottom:1px solid #d3e2f8;box-sizing:border-box;box-shadow:0 1px 0 #fff"></div>
<div style="position:absolute;left:53px;top:706px;width:17px;height:19px;border:1px solid #a2b6da;border-radius:3px;background:linear-gradient(#fbfdff,#e4edfb 45%,#c4d6f2);box-sizing:border-box"><svg width="15" height="17" style="position:absolute;left:0;top:0" viewBox="0 0 15 17"><path d="M9.5 4.5 L6 8 L9.5 11.5" transform="translate(0.0,1.0)" stroke="#4d5a70" stroke-width="2" fill="none"/></svg></div>
<div style="position:absolute;left:720px;top:706px;width:17px;height:19px;border:1px solid #a2b6da;border-radius:3px;background:linear-gradient(#fbfdff,#e4edfb 45%,#c4d6f2);box-sizing:border-box"><svg width="15" height="17" style="position:absolute;left:0;top:0" viewBox="0 0 15 17"><path d="M6.5 4.5 L10 8 L6.5 11.5" transform="translate(0.0,1.0)" stroke="#4d5a70" stroke-width="2" fill="none"/></svg></div>
<div style="position:absolute;left:640px;top:707px;width:8px;height:18px;border:1px solid #b3c3e4;border-radius:2px;background:linear-gradient(90deg,#c9d8f5,#f1f5fe 50%,#c6d6f4);box-sizing:border-box"></div>
<div style="position:absolute;left:52px;top:726px;width:686px;height:22px;background:linear-gradient(#dfecfc,#f9fbfe);border-top:1px solid #a0a0a0;border-left:1px solid #a0a0a0;border-bottom:1px solid #d3e2f8;box-sizing:border-box;box-shadow:0 1px 0 #fff"></div>
<div style="position:absolute;left:53px;top:728px;width:17px;height:19px;border:1px solid #a2b6da;border-radius:3px;background:linear-gradient(#fbfdff,#e4edfb 45%,#c4d6f2);box-sizing:border-box"><svg width="15" height="17" style="position:absolute;left:0;top:0" viewBox="0 0 15 17"><path d="M9.5 4.5 L6 8 L9.5 11.5" transform="translate(0.0,1.0)" stroke="#4d5a70" stroke-width="2" fill="none"/></svg></div>
<div style="position:absolute;left:720px;top:728px;width:17px;height:19px;border:1px solid #a2b6da;border-radius:3px;background:linear-gradient(#fbfdff,#e4edfb 45%,#c4d6f2);box-sizing:border-box"><svg width="15" height="17" style="position:absolute;left:0;top:0" viewBox="0 0 15 17"><path d="M6.5 4.5 L10 8 L6.5 11.5" transform="translate(0.0,1.0)" stroke="#4d5a70" stroke-width="2" fill="none"/></svg></div>
<div style="position:absolute;left:640px;top:729px;width:8px;height:18px;border:1px solid #b3c3e4;border-radius:2px;background:linear-gradient(90deg,#c9d8f5,#f1f5fe 50%,#c6d6f4);box-sizing:border-box"></div>
<div style="position:absolute;left:740px;top:704px;width:20px;height:40px;border:1px solid #3d5d8f;border-radius:4px;background:linear-gradient(#fbfdfe 0%,#eef3f6 45%,#e3eaf1 66%,#cfd9e7 68%,#bccade 90%,#a9b9d2 100%);box-shadow:inset 1px 1px 0 #fff,inset -1px -1px 0 rgba(255,255,255,0.5);overflow:hidden"><svg style="position:absolute;left:0;top:-1px" width="20" height="41" ><rect x="5" y="17" width="2" height="7" fill="#0000ff"/><path d="M9 17 L13 20.5 L9 24 Z" fill="#000"/></svg></div>
<div style="position:absolute;left:766px;top:704px;width:20px;height:40px;border:1px solid #3d5d8f;border-radius:4px;background:linear-gradient(#fbfdfe 0%,#eef3f6 45%,#e3eaf1 66%,#cfd9e7 68%,#bccade 90%,#a9b9d2 100%);box-shadow:inset 1px 1px 0 #fff,inset -1px -1px 0 rgba(255,255,255,0.5);overflow:hidden"><svg style="position:absolute;left:0;top:-1px" width="20" height="41" ><path d="M3 17 L7 20.5 L3 24 Z M8 17 L12 20.5 L8 24 Z" fill="#000"/><rect x="14" y="17" width="2" height="7" fill="#000"/></svg></div>
<div style="position:absolute;left:793px;top:704px;width:20px;height:40px;border:1px solid #3d5d8f;border-radius:4px;background:linear-gradient(#fbfdfe 0%,#eef3f6 45%,#e3eaf1 66%,#cfd9e7 68%,#bccade 90%,#a9b9d2 100%);box-shadow:inset 1px 1px 0 #fff,inset -1px -1px 0 rgba(255,255,255,0.5);overflow:hidden"><svg style="position:absolute;left:0;top:-1px" width="20" height="41" ><path d="M6 17 L2 20.5 L6 24 Z" fill="#000"/><rect x="7" y="17" width="2" height="7" fill="#0000ff"/><rect x="11" y="17" width="2" height="7" fill="#ff0000"/></svg></div>
<div style="position:absolute;left:819px;top:704px;width:20px;height:40px;border:1px solid #3d5d8f;border-radius:4px;background:linear-gradient(#fbfdfe 0%,#eef3f6 45%,#e3eaf1 66%,#cfd9e7 68%,#bccade 90%,#a9b9d2 100%);box-shadow:inset 1px 1px 0 #fff,inset -1px -1px 0 rgba(255,255,255,0.5);overflow:hidden"><svg style="position:absolute;left:0;top:-1px" width="20" height="41" ><rect x="4" y="17" width="2" height="7" fill="#ff0000"/><rect x="8" y="17" width="2" height="7" fill="#0000ff"/><path d="M11 17 L15 20.5 L11 24 Z" fill="#000"/></svg></div>
<div style="position:absolute;left:847px;top:704px;width:56px;height:18px;border:1px solid #3d5d8f;border-radius:4px;background:linear-gradient(#fbfdfe 0%,#eef3f6 45%,#e3eaf1 66%,#cfd9e7 68%,#bccade 90%,#a9b9d2 100%);box-shadow:inset 1px 1px 0 #fff,inset -1px -1px 0 rgba(255,255,255,0.5);overflow:hidden"></div>
<svg style="position:absolute;left:850px;top:706px" width="16" height="16" viewBox="0 0 16 16" shape-rendering="crispEdges"><rect x="4" y="0" width="1" height="7" fill="#ffff00"/><rect x="0" y="6" width="6" height="1" fill="#ffff00"/><rect x="1" y="3" width="1" height="1" fill="#ffff00"/><rect x="2" y="4" width="1" height="1" fill="#ffff00"/><rect x="3" y="5" width="1" height="1" fill="#ffff00"/><rect x="1" y="9" width="1" height="1" fill="#ffff00"/><rect x="2" y="8" width="1" height="1" fill="#ffff00"/><rect x="3" y="7" width="1" height="1" fill="#ffff00"/><rect x="9" y="6" width="2" height="1" fill="#ffff00"/><rect x="7" y="0" width="5" height="1" fill="#000"/><rect x="6" y="1" width="1" height="1" fill="#000"/><rect x="12" y="1" width="1" height="1" fill="#000"/><rect x="5" y="2" width="1" height="4" fill="#000"/><rect x="13" y="2" width="1" height="5" fill="#000"/><rect x="7" y="1" width="5" height="1" fill="#c8c8c8"/><rect x="6" y="2" width="1" height="4" fill="#c8c8c8"/><rect x="12" y="2" width="1" height="5" fill="#c8c8c8"/><rect x="8" y="2" width="3" height="1" fill="#000"/><rect x="7" y="3" width="1" height="3" fill="#000"/><rect x="11" y="3" width="1" height="4" fill="#000"/><rect x="6" y="6" width="1" height="1" fill="#000"/><rect x="8" y="3" width="3" height="3" fill="#fff"/><path d="M4 7 H14 V8 H15 V13 H14 V14 H13 V15 H6 V14 H5 V13 H4 V12 H3 V8 H4 Z" fill="#000"/><rect x="4" y="8" width="10" height="5" fill="#b0b0b0"/><rect x="5" y="13" width="8" height="1" fill="#b0b0b0"/><rect x="4" y="9" width="10" height="1" fill="#e4e4e4"/><rect x="4" y="11" width="10" height="1" fill="#e4e4e4"/><rect x="5" y="13" width="8" height="1" fill="#e4e4e4"/><rect x="7" y="9" width="4" height="2" fill="#000"/><rect x="8" y="11" width="2" height="3" fill="#000"/></svg>
<div style="position:absolute;left:871px;top:709px;font-size:12.2px;line-height:1;color:#000;font-weight:bold;white-space:nowrap;letter-spacing:0.6px">ORI</div>
<div style="position:absolute;left:847px;top:726px;width:56px;height:18px;border:1px solid #3d5d8f;border-radius:4px;background:linear-gradient(#fbfdfe 0%,#eef3f6 45%,#e3eaf1 66%,#cfd9e7 68%,#bccade 90%,#a9b9d2 100%);box-shadow:inset 1px 1px 0 #fff,inset -1px -1px 0 rgba(255,255,255,0.5);overflow:hidden"></div>
<svg style="position:absolute;left:850px;top:728px" width="16" height="16" viewBox="0 0 16 16" shape-rendering="crispEdges"><rect x="4" y="0" width="1" height="7" fill="#ffff00"/><rect x="0" y="6" width="6" height="1" fill="#ffff00"/><rect x="1" y="3" width="1" height="1" fill="#ffff00"/><rect x="2" y="4" width="1" height="1" fill="#ffff00"/><rect x="3" y="5" width="1" height="1" fill="#ffff00"/><rect x="1" y="9" width="1" height="1" fill="#ffff00"/><rect x="2" y="8" width="1" height="1" fill="#ffff00"/><rect x="3" y="7" width="1" height="1" fill="#ffff00"/><rect x="9" y="6" width="2" height="1" fill="#ffff00"/><rect x="7" y="0" width="5" height="1" fill="#000"/><rect x="6" y="1" width="1" height="1" fill="#000"/><rect x="12" y="1" width="1" height="1" fill="#000"/><rect x="5" y="2" width="1" height="4" fill="#000"/><rect x="13" y="2" width="1" height="5" fill="#000"/><rect x="7" y="1" width="5" height="1" fill="#c8c8c8"/><rect x="6" y="2" width="1" height="4" fill="#c8c8c8"/><rect x="12" y="2" width="1" height="5" fill="#c8c8c8"/><rect x="8" y="2" width="3" height="1" fill="#000"/><rect x="7" y="3" width="1" height="3" fill="#000"/><rect x="11" y="3" width="1" height="4" fill="#000"/><rect x="6" y="6" width="1" height="1" fill="#000"/><rect x="8" y="3" width="3" height="3" fill="#fff"/><path d="M4 7 H14 V8 H15 V13 H14 V14 H13 V15 H6 V14 H5 V13 H4 V12 H3 V8 H4 Z" fill="#000"/><rect x="4" y="8" width="10" height="5" fill="#b0b0b0"/><rect x="5" y="13" width="8" height="1" fill="#b0b0b0"/><rect x="4" y="9" width="10" height="1" fill="#e4e4e4"/><rect x="4" y="11" width="10" height="1" fill="#e4e4e4"/><rect x="5" y="13" width="8" height="1" fill="#e4e4e4"/><rect x="7" y="9" width="4" height="2" fill="#000"/><rect x="8" y="11" width="2" height="3" fill="#000"/></svg>
<div style="position:absolute;left:871px;top:731px;font-size:12.2px;line-height:1;color:#000;font-weight:bold;white-space:nowrap;transform:scaleX(0.95);transform-origin:0 0">MOD</div>
<div style="position:absolute;left:909px;top:704px;width:21px;height:40px;border:1px solid #3d5d8f;border-radius:4px;background:linear-gradient(#fbfdfe 0%,#eef3f6 45%,#e3eaf1 66%,#cfd9e7 68%,#bccade 90%,#a9b9d2 100%);box-shadow:inset 1px 1px 0 #fff,inset -1px -1px 0 rgba(255,255,255,0.5);overflow:hidden"></div>
<svg style="position:absolute;left:911px;top:717px" width="16" height="15" viewBox="0 0 16 15" shape-rendering="crispEdges"><rect x="2" y="0" width="1" height="13" fill="#000"/><rect x="2" y="12" width="14" height="1" fill="#000"/><rect x="0" y="3" width="2" height="1" fill="#606060"/><rect x="0" y="6" width="2" height="1" fill="#606060"/><rect x="0" y="9" width="2" height="1" fill="#606060"/><rect x="4" y="13" width="1" height="1" fill="#606060"/><rect x="8" y="13" width="1" height="1" fill="#606060"/><rect x="12" y="13" width="1" height="1" fill="#606060"/><rect x="3" y="3" width="13" height="2" fill="#0000ff"/><path d="M3 4 L8 1 V7 Z" fill="#0000ff"/><rect x="3" y="9" width="13" height="2" fill="#ff0000"/><path d="M3 10 L8 7 V13 Z" fill="#ff0000"/><rect x="7" y="6" width="2" height="2" fill="#0000ff"/></svg>
<div style="position:absolute;left:938px;top:706px;width:187px;height:40px;border:1px solid #d0d0c8;border-radius:5px;"></div>
<div style="position:absolute;left:948px;top:701px;padding:0 2px;background:#ebe9ed;font-size:12.4px;line-height:1;color:#2452a8;font-weight:bold;white-space:nowrap;letter-spacing:0.6px">Vai a ...</div>
<div style="position:absolute;left:944px;top:718px;width:63px;height:19px;background:#fff;border:1px solid #a8a8a8;"><div style="position:absolute;left:3px;top:3px;font-size:11.6px;line-height:1;color:#000;font-weight:bold;white-space:nowrap">1C6E4C</div></div>
<svg style="position:absolute;left:1016px;top:721px" width="16" height="14" viewBox="0 0 16 14" shape-rendering="crispEdges"><rect x="0" y="1" width="3" height="12" fill="#008000"/><rect x="0" y="12" width="16" height="1" fill="#000"/><rect x="2" y="13" width="1" height="1" fill="#606060"/><rect x="6" y="13" width="1" height="1" fill="#606060"/><rect x="10" y="13" width="1" height="1" fill="#606060"/><rect x="14" y="13" width="1" height="1" fill="#606060"/><rect x="5" y="3" width="11" height="2" fill="#0000ff"/><path d="M3 4 L7 1 V7 Z" fill="#0000ff"/><rect x="5" y="8" width="11" height="2" fill="#ff0000"/><path d="M3 9 L7 6 V12 Z" fill="#ff0000"/></svg>
<svg style="position:absolute;left:1039px;top:721px" width="16" height="14" viewBox="0 0 16 14" shape-rendering="crispEdges"><rect x="13" y="1" width="3" height="12" fill="#008000"/><rect x="0" y="12" width="16" height="1" fill="#000"/><rect x="1" y="13" width="1" height="1" fill="#606060"/><rect x="5" y="13" width="1" height="1" fill="#606060"/><rect x="9" y="13" width="1" height="1" fill="#606060"/><rect x="13" y="13" width="1" height="1" fill="#606060"/><rect x="0" y="3" width="11" height="2" fill="#0000ff"/><path d="M13 4 L9 1 V7 Z" fill="#0000ff"/><rect x="0" y="8" width="11" height="2" fill="#ff0000"/><path d="M13 9 L9 6 V12 Z" fill="#ff0000"/></svg>
<div style="position:absolute;left:1062px;top:719px;width:1px;height:19px;background:#cfced4"></div>
<div style="position:absolute;left:1063px;top:719px;width:1px;height:19px;background:#fff"></div>
<svg style="position:absolute;left:1071px;top:721px" width="16" height="16" viewBox="0 0 16 16" shape-rendering="crispEdges"><path d="M0 0 H2 L3 2 L4 0 H6 V5 H5 V2 L3.5 4.5 H2.5 L1 2 V5 H0 Z" fill="#000080"/><rect x="5" y="10" width="10" height="2" fill="#00ffff"/><path d="M1 11 L5 7.5 V14.5 Z" fill="#00ffff"/></svg>
<svg style="position:absolute;left:1093px;top:721px" width="16" height="16" viewBox="0 0 16 16" shape-rendering="crispEdges"><path d="M8 0 H10 L11 2 L12 0 H14 V5 H13 V2 L11.5 4.5 H10.5 L9 2 V5 H8 Z" fill="#000080"/><rect x="0" y="10" width="10" height="2" fill="#00ffff"/><path d="M15 11 L11 7.5 V14.5 Z" fill="#00ffff"/></svg>
<div style="position:absolute;left:0px;top:750px;width:1280px;height:1px;background:#dcdde2"></div>
<div style="position:absolute;left:0px;top:751px;width:1280px;height:18px;background:#eff2f7"></div>
<div style="position:absolute;left:0px;top:769px;width:1280px;height:1px;background:#fff"></div>
<div style="position:absolute;left:668px;top:754px;width:1px;height:14px;background:#d0cfd4"></div>
<div style="position:absolute;left:348px;top:754px;width:1px;height:14px;background:#d0cfd4"></div>
<div style="position:absolute;left:568px;top:754px;width:1px;height:14px;background:#d0cfd4"></div>
<div style="position:absolute;left:673px;top:756px;font-size:10.6px;line-height:1;color:#000;font-weight:normal;white-space:nowrap;">Checksum: 85</div>
<div style="position:absolute;left:0px;top:770px;width:1280px;height:30px;background:linear-gradient(#2848a8 0px,#2848a8 1px,#92cbf3 1px,#80bfec 3px,#6ea9e6 8px,#5793dc 15px,#5793dc 16px,#3a7ad0 16px,#3364c4 22px,#2c55b2 29px,#253f90 30px)"></div>
<div style="position:absolute;left:0;top:770px;width:98px;height:30px;border-radius:0 14px 14px 0 / 0 15px 15px 0;background:linear-gradient(#3a7a3a 0px,#3a7a3a 1px,#94cc94 1px,#7cbc7c 3px,#58ab58 9px,#45a045 15px,#1e9c1e 16px,#14b014 22px,#0dc40d 28px,#0ea80e 30px);box-shadow:inset -1px 0 0 rgba(255,255,255,0.55)"></div>
<svg style="position:absolute;left:10px;top:775px" width="20" height="20" viewBox="0 0 20 20"><path d="M4 3 Q7 1.5 11 3 L10 9 Q6.5 7.5 3 9 Z" fill="#f25a1a"/><path d="M12 3.5 Q15 4.5 19 3 L18 9.5 Q14.5 11 11 9.5 Z" fill="#7ac142"/><path d="M3 10 Q6.5 8.5 10 10 L9 16.5 Q5.5 15 2 16.5 Z" fill="#3b7ff0"/><path d="M11 10.5 Q14.5 12 18 10.5 L17 17 Q13.5 18.5 10 17 Z" fill="#fbc50a"/></svg>
<div style="position:absolute;left:34px;top:777px;font-size:17.5px;line-height:1;color:#fff;font-weight:bold;white-space:nowrap;font-style:italic;text-shadow:1px 1px 1px #1a4a1a;">start</div>
<svg style="position:absolute;left:110px;top:778px" width="15" height="15" viewBox="0 0 15 15"><path d="M7.5 7.5 L1.44 4.00 A7 7 0 0 1 13.56 4.00 Z" fill="#db4437"/><path d="M7.5 7.5 L13.56 4.00 A7 7 0 0 1 7.50 14.50 Z" fill="#f4c20d"/><path d="M7.5 7.5 L7.50 14.50 A7 7 0 0 1 1.44 4.00 Z" fill="#0f9d58"/><circle cx="7.5" cy="7.5" r="3.4" fill="#fff"/><circle cx="7.5" cy="7.5" r="2.6" fill="#4a8af4"/></svg>
<svg style="position:absolute;left:132px;top:776px" width="16" height="16" viewBox="0 0 16 16"><rect x="0.5" y="1" width="12" height="14" rx="2" fill="#1d5fc8"/><path d="M3 5 Q6 2 10 4 L10 6 Q6 4 4 6 L4 11 Q7 13 10 11 L10 13 Q6 15 3 12 Z" fill="#f4f0d0"/><rect x="5" y="6" width="4" height="4" fill="#fff"/><path d="M5 9 L8 8" stroke="#000" stroke-width="1"/><circle cx="13.5" cy="5.5" r="1.8" fill="#e85020"/></svg>
<svg style="position:absolute;left:157px;top:776px" width="14" height="17" viewBox="0 0 14 17"><path d="M1 2 L12 1 V15 L1 16 Z" fill="#c4d4f0" stroke="#6a86c0" stroke-width="0.8"/><rect x="3" y="3" width="7" height="3" fill="#5a7ad0"/><path d="M3 8 H4.5 M6 8 H7.5 M9 8 H10.5 M3 10 H4.5 M6 10 H7.5 M9 10 H10.5 M3 12 H4.5 M6 12 H7.5 M9 12 H10.5" stroke="#7a90c8" stroke-width="1.2"/><rect x="8.5" y="7" width="2" height="2" fill="#f08030"/></svg>
<svg style="position:absolute;left:179px;top:776px" width="13" height="18" viewBox="0 0 13 18"><path d="M2 8 H12 L10.5 17 H3.5 Z" fill="#9ad0a8" opacity="0.85"/><path d="M4 10 L3 1.5" stroke="#e06020" stroke-width="1.6"/><circle cx="3" cy="1.8" r="1.5" fill="#d05010"/><path d="M6.5 12 L7 2" stroke="#f0c020" stroke-width="1.6"/><path d="M8 13 L11 3" stroke="#e04020" stroke-width="1.6"/><path d="M5 13 L9 2" stroke="#4090e0" stroke-width="1"/><path d="M3 12 H11" stroke="#20a040" stroke-width="1.5"/></svg>
<div style="position:absolute;left:251px;top:774px;width:158px;height:24px;border-radius:3px;background:linear-gradient(#1e4aa8,#1a4099 50%,#1e48a4);border:1px solid #10307a;box-sizing:border-box;box-shadow:inset 1px 1px 1px #0d2a6e"></div>
<svg style="position:absolute;left:261px;top:778px" width="17" height="17" viewBox="0 0 17 17"><defs><radialGradient id="ai261" cx="0.5" cy="0.5" r="0.6"><stop offset="0" stop-color="#f8a080"/><stop offset="0.6" stop-color="#e84a2a"/><stop offset="1" stop-color="#c01010"/></radialGradient></defs>
<path d="M4.5 0.5 H15 L16.5 2 L16 6 L13.5 15.5 L12 16.5 H2 L0.5 15 L1 11 L3 2 Z" fill="#2a2020"/>
<path d="M5 1.5 H14.8 L15.6 2.5 L13 15 L12 15.6 H2.2 L1.5 14.6 L3.8 2.3 Z" fill="#b8a8a0"/>
<path d="M5.5 2.5 H14.2 L14.6 3 L12.3 14 L11.6 14.6 H3 L2.6 14 L4.8 3 Z" fill="url(#ai261)"/>
<path d="M7.2 4.5 H12.6 L12.3 5.6 H7 Z" fill="#ff1010"/>
<path d="M6.5 7.2 H11.8 L11.2 10 H7.4 L7.2 11 H10.8 L10.4 12.6 H5 Z" fill="#1a1010"/>
</svg>
<div style="position:absolute;left:280px;top:780px;font-size:10.8px;line-height:1;color:#fff;font-weight:normal;white-space:nowrap;">ECM Titanium</div>
<div style="position:absolute;left:1069px;top:777px;width:13px;height:16px;background:#3060b0"></div>
<div style="position:absolute;left:1070px;top:779px;font-size:11.5px;line-height:1;color:#fff;font-weight:normal;white-space:nowrap;">IT</div>
<div style="position:absolute;left:1097px;top:770px;width:183px;height:30px;background:linear-gradient(#3a5a7a 0px,#3a5a7a 1px,#f4f8fe 1px,#dce6f4 8px,#ccdaee 15px,#ccdaee 16px,#a8c0e4 16px,#90b0dc 22px,#6e98d4 30px);border-left:1px solid #b8d0f0;box-sizing:border-box"></div>
<svg style="position:absolute;left:1108px;top:779px" width="16" height="12"><rect width="16" height="12" fill="#f41a0a"/><path d="M1.5 10 L5 2 H6.5 L6.5 10 H5 V8 H3.5 L2.8 10 Z M4 6.5 H5 V4 Z" fill="#fff"/><rect x="7" y="3" width="5" height="1.6" fill="#fff"/><rect x="8.6" y="3" width="1.6" height="7" fill="#fff"/><rect x="12.5" y="4.5" width="1.6" height="5.5" fill="#fff"/><rect x="12.5" y="2.5" width="1.6" height="1.2" fill="#fff"/></svg>
<svg style="position:absolute;left:1126px;top:777px" width="16" height="16" shape-rendering="crispEdges"><rect x="0" y="2" width="8" height="6" fill="#2a2a6a"/><rect x="1" y="3" width="6" height="4" fill="#3a3a80"/><rect x="0" y="8" width="7" height="1" fill="#b0b8e0"/><rect x="0" y="9" width="7" height="2" fill="#e8e8f0"/><rect x="1" y="11" width="6" height="1" fill="#303070"/><path d="M9 3 H10 V7 H9 Z M11 1 H12 V8 H11 Z" fill="#303030"/><path d="M10 2 H11 V8 H10 Z" fill="#e0e0e0"/></svg><svg style="position:absolute;left:1133px;top:786px" width="7" height="6"><path d="M0.5 0.5 L6 5.5 M6 0.5 L0.5 5.5" stroke="#f01010" stroke-width="1.5"/></svg>
<svg style="position:absolute;left:1144px;top:776px" width="16" height="16" shape-rendering="crispEdges"><rect x="6" y="0" width="7" height="6" fill="#2a2a6a"/><rect x="7" y="1" width="5" height="4" fill="#3a3a80"/><rect x="0" y="4" width="7" height="6" fill="#2a2a6a"/><rect x="1" y="5" width="5" height="4" fill="#3a3a80"/><rect x="0" y="10" width="6" height="1" fill="#b0b8e0"/><rect x="0" y="11" width="6" height="2" fill="#e8e8f0"/></svg><svg style="position:absolute;left:1151px;top:785px" width="8" height="7"><path d="M0.5 0.5 L7 6.5 M7 0.5 L0.5 6.5" stroke="#f01010" stroke-width="1.5"/></svg>
<svg style="position:absolute;left:1163px;top:777px" width="15" height="15" shape-rendering="crispEdges"><path d="M0 5 H3 L7 1 H9 V13 H7 L3 9 H0 Z" fill="#000"/><path d="M1 6 H3.5 L7 2.5 V11.5 L3.5 8 H1 Z" fill="#e0703a"/><path d="M11 2 H12 V3 H13 V11 H12 V12 H11 V11 H12 V3 H11 Z" fill="#201010"/></svg>
<svg style="position:absolute;left:1182px;top:776px" width="12" height="17" shape-rendering="crispEdges"><path d="M3 0 H9 V1 H10 V3 H11 V14 H10 V16 H9 V17 H3 V16 H2 V14 H1 V3 H2 V1 H3 Z" fill="#000"/><path d="M3 1 H9 V3 H10 V14 H9 V16 H3 V14 H2 V3 H3 Z" fill="#1a2ae0"/><path d="M6 3 V14 M6 3 L8.5 6 L4 10 M6 14 L8.5 11 L4 7" stroke="#f01818" stroke-width="1.3" fill="none" shape-rendering="geometricPrecision"/></svg>
<svg style="position:absolute;left:1198px;top:776px" width="16" height="16"><circle cx="7" cy="7" r="5.5" fill="#8a8a92"/><circle cx="6" cy="6" r="3" fill="#c8c8d0"/><circle cx="5.5" cy="5.5" r="1.2" fill="#fff"/><path d="M4 2 Q2 4 3 6" stroke="#9080c0" stroke-width="1" fill="none"/><path d="M9 14 Q13 13 14 9 M8 15.5 Q14 15 15.5 9" stroke="#b0a8e0" stroke-width="0.9" fill="none"/></svg>
<svg style="position:absolute;left:1216px;top:776px" width="16" height="17"><path d="M1 1 L3 3 L3 8 L7 12" stroke="#000" stroke-width="1.2" fill="none"/><path d="M2 2 L4 4 L4 8 L8 11" stroke="#fff" stroke-width="1.2" fill="none"/><path d="M13 2 L14 9 L7 15 Z" fill="#f8f8f8" stroke="#000" stroke-width="0.8"/><path d="M12 4 L9 9 L6 14" stroke="#00e0e0" stroke-width="2"/><path d="M10 12 L14 15" stroke="#000" stroke-width="2.5"/><path d="M10.5 12.5 L13.5 14.5" stroke="#f0f020" stroke-width="1.2"/></svg>
<div style="position:absolute;left:1239px;top:780px;font-size:11.5px;line-height:1;color:#000;font-weight:normal;white-space:nowrap;">14.27</div>
</body></html>
